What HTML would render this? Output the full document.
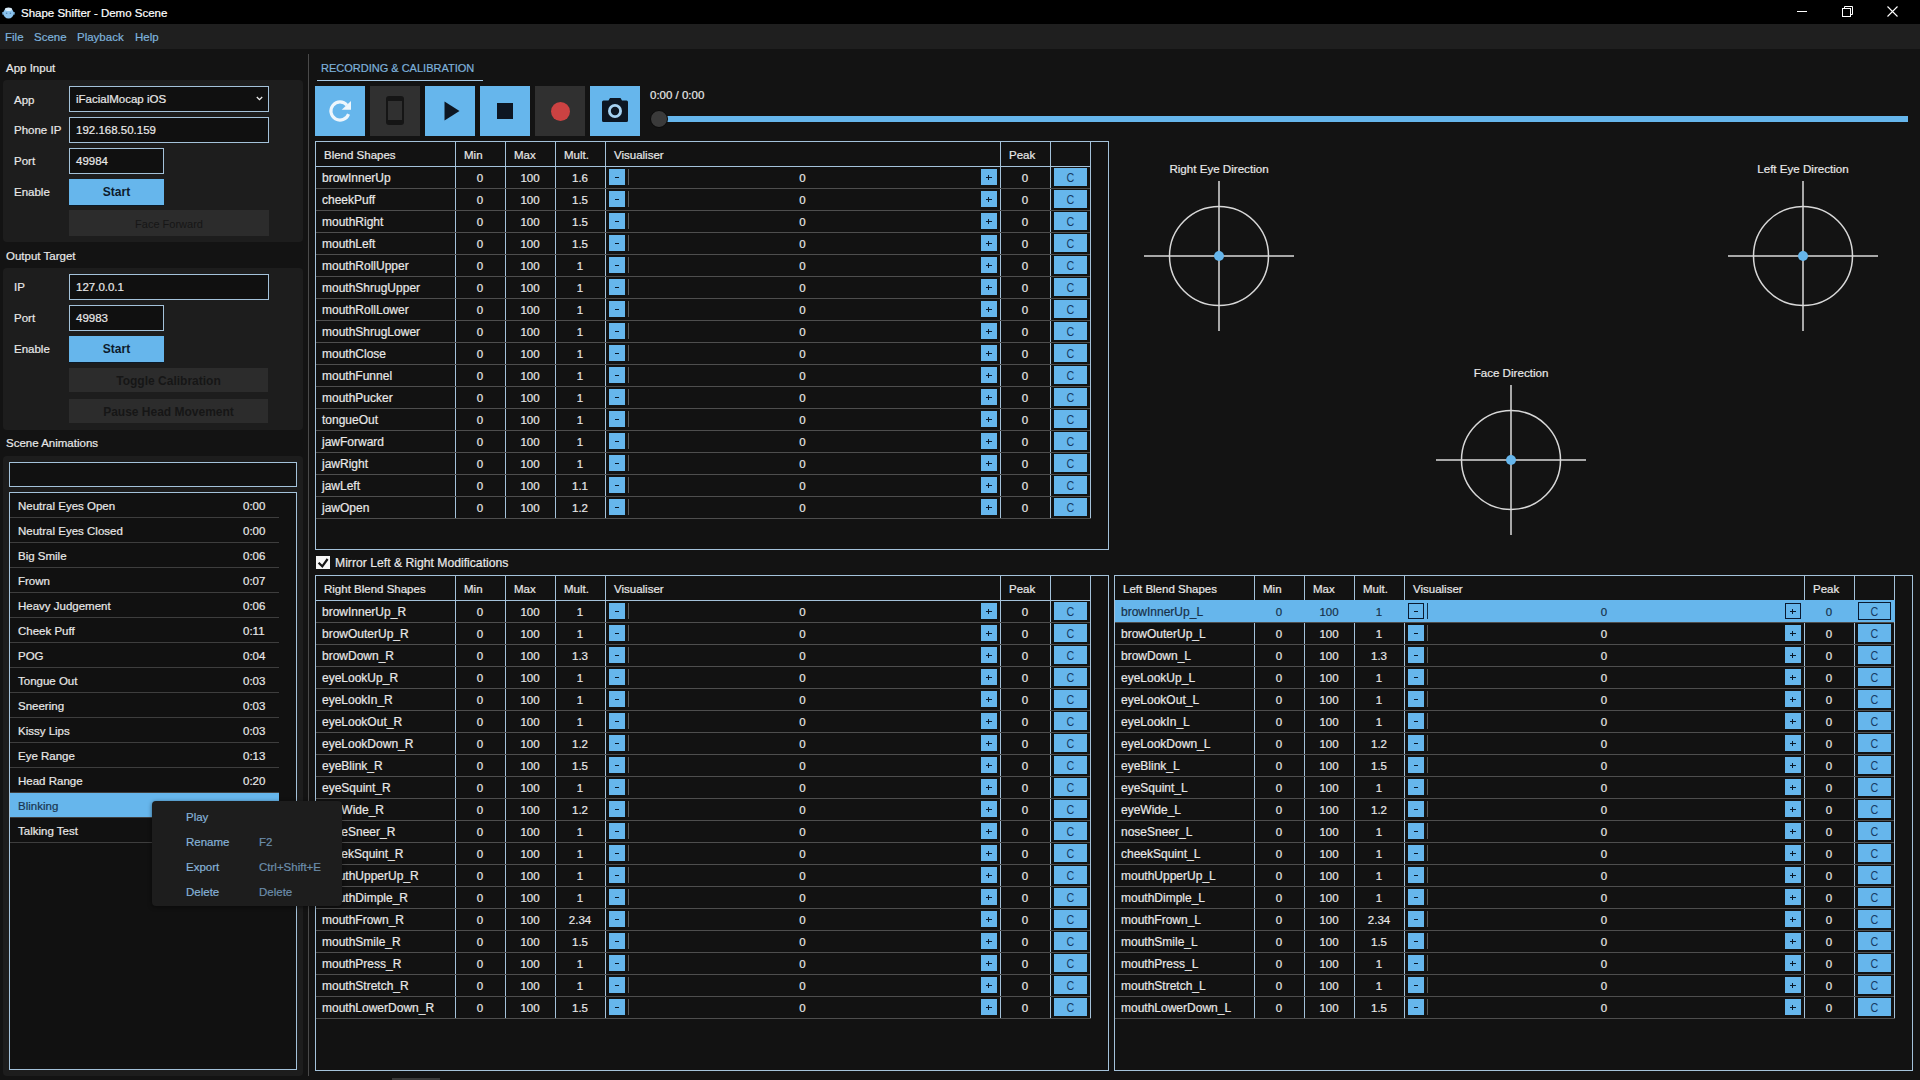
<!DOCTYPE html>
<html><head><meta charset="utf-8"><title>Shape Shifter - Demo Scene</title>
<style>
html,body{margin:0;padding:0;}
body{width:1920px;height:1080px;position:relative;overflow:hidden;background:#131313;font-family:"Liberation Sans",sans-serif;font-size:11.5px;color:#e8e8e8;}
.a{position:absolute;}
.t{position:absolute;white-space:nowrap;-webkit-text-stroke:0.2px currentColor;}
svg{display:block;}
</style></head><body>
<div class="a" style="left:0px;top:0px;width:1920px;height:24px;background:#000;"></div>
<svg class="a" style="left:2px;top:6px" width="13" height="13" viewBox="0 0 13 13"><ellipse cx="6.5" cy="7.3" rx="5.2" ry="5.2" fill="#8cc4ee"/><ellipse cx="6.5" cy="3.2" rx="3.6" ry="1.8" fill="#d8ecfa"/><rect x="0.3" y="6" width="1.8" height="2.6" fill="#7ab4e0"/><rect x="10.9" y="6" width="1.8" height="2.6" fill="#7ab4e0"/><circle cx="4.6" cy="7.3" r="0.8" fill="#4a80b0"/><circle cx="8.4" cy="7.3" r="0.8" fill="#4a80b0"/></svg>
<div class="t" style="left:21px;top:3px;height:20px;line-height:20px;font-size:11.5px;color:#fff;">Shape Shifter - Demo Scene</div>
<div class="a" style="left:1797px;top:11px;width:10px;height:1px;background:#fff;"></div>
<svg class="a" style="left:1841px;top:5px" width="13" height="13" viewBox="0 0 13 13" fill="none" stroke="#fff" stroke-width="1"><rect x="1.5" y="3.5" width="8" height="8"/><path d="M3.5 3.5V1.5H11.5V9.5H9.5"/></svg>
<svg class="a" style="left:1887px;top:6px" width="11" height="11" viewBox="0 0 11 11" stroke="#fff" stroke-width="1.1"><path d="M0.5 0.5L10.5 10.5M10.5 0.5L0.5 10.5"/></svg>
<div class="a" style="left:0px;top:24px;width:1920px;height:25px;background:#1f1f1f;"></div>
<div class="t" style="left:5px;top:27px;height:20px;line-height:20px;color:#7eb2dc;font-size:11.5px;">File</div>
<div class="t" style="left:34px;top:27px;height:20px;line-height:20px;color:#7eb2dc;font-size:11.5px;">Scene</div>
<div class="t" style="left:77px;top:27px;height:20px;line-height:20px;color:#7eb2dc;font-size:11.5px;">Playback</div>
<div class="t" style="left:135px;top:27px;height:20px;line-height:20px;color:#7eb2dc;font-size:11.5px;">Help</div>
<div class="t" style="left:6px;top:58px;height:20px;line-height:20px;">App Input</div>
<div class="a" style="left:3px;top:80px;width:300px;height:162px;background:#1d1d1d;border-radius:4px;"></div>
<div class="t" style="left:14px;top:90px;height:20px;line-height:20px;">App</div>
<div class="t" style="left:14px;top:120px;height:20px;line-height:20px;">Phone IP</div>
<div class="t" style="left:14px;top:151px;height:20px;line-height:20px;">Port</div>
<div class="t" style="left:14px;top:182px;height:20px;line-height:20px;">Enable</div>
<div class="a" style="left:69px;top:86px;width:198px;height:24px;background:#101010;border:1px solid #a4c2da;"></div>
<div class="t" style="left:76px;top:86px;height:26px;line-height:26px;">iFacialMocap iOS</div>
<svg class="a" style="left:256px;top:96px" width="7" height="5" viewBox="0 0 7 5" fill="none" stroke="#f0f0f0" stroke-width="1.3"><path d="M0.8 1L3.5 3.6L6.2 1"/></svg>
<div class="a" style="left:69px;top:117px;width:198px;height:24px;background:#101010;border:1px solid #a4c2da;"></div>
<div class="t" style="left:76px;top:117px;height:26px;line-height:26px;">192.168.50.159</div>
<div class="a" style="left:69px;top:148px;width:93px;height:24px;background:#101010;border:1px solid #a4c2da;"></div>
<div class="t" style="left:76px;top:148px;height:26px;line-height:26px;">49984</div>
<div class="a" style="left:69px;top:179px;width:95px;height:26px;background:#66b6ec;"></div>
<div class="a" style="left:69px;top:205px;width:95px;height:1px;background:#0b1a28;"></div>
<div class="t" style="left:69.0px;top:179px;width:95px;height:26px;line-height:26px;text-align:center;color:#0d1b2c;font-weight:bold;font-size:12px;-webkit-text-stroke:0;">Start</div>
<div class="a" style="left:69px;top:210px;width:200px;height:26px;background:#2c2c2c;"></div>
<div class="t" style="left:69.0px;top:211px;width:200px;height:26px;line-height:26px;text-align:center;color:#161616;-webkit-text-stroke:0;font-size:11px;">Face Forward</div>
<div class="t" style="left:6px;top:246px;height:20px;line-height:20px;">Output Target</div>
<div class="a" style="left:3px;top:268px;width:300px;height:162px;background:#1d1d1d;border-radius:4px;"></div>
<div class="t" style="left:14px;top:277px;height:20px;line-height:20px;">IP</div>
<div class="t" style="left:14px;top:308px;height:20px;line-height:20px;">Port</div>
<div class="t" style="left:14px;top:339px;height:20px;line-height:20px;">Enable</div>
<div class="a" style="left:69px;top:274px;width:198px;height:24px;background:#101010;border:1px solid #a4c2da;"></div>
<div class="t" style="left:76px;top:274px;height:26px;line-height:26px;">127.0.0.1</div>
<div class="a" style="left:69px;top:305px;width:93px;height:24px;background:#101010;border:1px solid #a4c2da;"></div>
<div class="t" style="left:76px;top:305px;height:26px;line-height:26px;">49983</div>
<div class="a" style="left:69px;top:336px;width:95px;height:26px;background:#66b6ec;"></div>
<div class="a" style="left:69px;top:362px;width:95px;height:1px;background:#0b1a28;"></div>
<div class="t" style="left:69.0px;top:336px;width:95px;height:26px;line-height:26px;text-align:center;color:#0d1b2c;font-weight:bold;font-size:12px;-webkit-text-stroke:0;">Start</div>
<div class="a" style="left:69px;top:368px;width:199px;height:24px;background:#2c2c2c;"></div>
<div class="t" style="left:69.0px;top:369px;width:199px;height:24px;line-height:24px;text-align:center;color:#161616;-webkit-text-stroke:0;font-weight:bold;font-size:12px;">Toggle Calibration</div>
<div class="a" style="left:69px;top:399px;width:199px;height:24px;background:#2c2c2c;"></div>
<div class="t" style="left:69.0px;top:400px;width:199px;height:24px;line-height:24px;text-align:center;color:#161616;-webkit-text-stroke:0;font-weight:bold;font-size:12px;">Pause Head Movement</div>
<div class="t" style="left:6px;top:433px;height:20px;line-height:20px;">Scene Animations</div>
<div class="a" style="left:3px;top:456px;width:300px;height:620px;background:#1d1d1d;border-radius:4px;"></div>
<div class="a" style="left:9px;top:462px;width:286px;height:23px;background:#111;border:1px solid #a4c2da;"></div>
<div class="a" style="left:9px;top:492px;width:286px;height:576px;background:#111;border:1px solid #a4c2da;"></div>
<div class="t" style="left:18px;top:494px;height:25px;line-height:25px;font-size:11.5px;">Neutral Eyes Open</div>
<div class="t" style="left:243px;top:494px;height:25px;line-height:25px;font-size:11.5px;">0:00</div>
<div class="a" style="left:10px;top:517px;width:269px;height:1px;background:#3e3e3e;"></div>
<div class="t" style="left:18px;top:519px;height:25px;line-height:25px;font-size:11.5px;">Neutral Eyes Closed</div>
<div class="t" style="left:243px;top:519px;height:25px;line-height:25px;font-size:11.5px;">0:00</div>
<div class="a" style="left:10px;top:542px;width:269px;height:1px;background:#3e3e3e;"></div>
<div class="t" style="left:18px;top:544px;height:25px;line-height:25px;font-size:11.5px;">Big Smile</div>
<div class="t" style="left:243px;top:544px;height:25px;line-height:25px;font-size:11.5px;">0:06</div>
<div class="a" style="left:10px;top:567px;width:269px;height:1px;background:#3e3e3e;"></div>
<div class="t" style="left:18px;top:569px;height:25px;line-height:25px;font-size:11.5px;">Frown</div>
<div class="t" style="left:243px;top:569px;height:25px;line-height:25px;font-size:11.5px;">0:07</div>
<div class="a" style="left:10px;top:592px;width:269px;height:1px;background:#3e3e3e;"></div>
<div class="t" style="left:18px;top:594px;height:25px;line-height:25px;font-size:11.5px;">Heavy Judgement</div>
<div class="t" style="left:243px;top:594px;height:25px;line-height:25px;font-size:11.5px;">0:06</div>
<div class="a" style="left:10px;top:617px;width:269px;height:1px;background:#3e3e3e;"></div>
<div class="t" style="left:18px;top:619px;height:25px;line-height:25px;font-size:11.5px;">Cheek Puff</div>
<div class="t" style="left:243px;top:619px;height:25px;line-height:25px;font-size:11.5px;">0:11</div>
<div class="a" style="left:10px;top:642px;width:269px;height:1px;background:#3e3e3e;"></div>
<div class="t" style="left:18px;top:644px;height:25px;line-height:25px;font-size:11.5px;">POG</div>
<div class="t" style="left:243px;top:644px;height:25px;line-height:25px;font-size:11.5px;">0:04</div>
<div class="a" style="left:10px;top:667px;width:269px;height:1px;background:#3e3e3e;"></div>
<div class="t" style="left:18px;top:669px;height:25px;line-height:25px;font-size:11.5px;">Tongue Out</div>
<div class="t" style="left:243px;top:669px;height:25px;line-height:25px;font-size:11.5px;">0:03</div>
<div class="a" style="left:10px;top:692px;width:269px;height:1px;background:#3e3e3e;"></div>
<div class="t" style="left:18px;top:694px;height:25px;line-height:25px;font-size:11.5px;">Sneering</div>
<div class="t" style="left:243px;top:694px;height:25px;line-height:25px;font-size:11.5px;">0:03</div>
<div class="a" style="left:10px;top:717px;width:269px;height:1px;background:#3e3e3e;"></div>
<div class="t" style="left:18px;top:719px;height:25px;line-height:25px;font-size:11.5px;">Kissy Lips</div>
<div class="t" style="left:243px;top:719px;height:25px;line-height:25px;font-size:11.5px;">0:03</div>
<div class="a" style="left:10px;top:742px;width:269px;height:1px;background:#3e3e3e;"></div>
<div class="t" style="left:18px;top:744px;height:25px;line-height:25px;font-size:11.5px;">Eye Range</div>
<div class="t" style="left:243px;top:744px;height:25px;line-height:25px;font-size:11.5px;">0:13</div>
<div class="a" style="left:10px;top:767px;width:269px;height:1px;background:#3e3e3e;"></div>
<div class="t" style="left:18px;top:769px;height:25px;line-height:25px;font-size:11.5px;">Head Range</div>
<div class="t" style="left:243px;top:769px;height:25px;line-height:25px;font-size:11.5px;">0:20</div>
<div class="a" style="left:10px;top:792px;width:269px;height:1px;background:#3e3e3e;"></div>
<div class="a" style="left:10px;top:793px;width:269px;height:25px;background:#66b6ec;"></div>
<div class="t" style="left:18px;top:794px;height:25px;line-height:25px;color:#1a3550;font-size:11.5px;">Blinking</div>
<div class="a" style="left:10px;top:817px;width:269px;height:1px;background:#3e3e3e;"></div>
<div class="t" style="left:18px;top:819px;height:25px;line-height:25px;font-size:11.5px;">Talking Test</div>
<div class="t" style="left:243px;top:819px;height:25px;line-height:25px;font-size:11.5px;">0:15</div>
<div class="a" style="left:10px;top:842px;width:269px;height:1px;background:#3e3e3e;"></div>
<div class="a" style="left:308px;top:54px;width:1px;height:1022px;background:#4a4a4a;"></div>
<div class="t" style="left:321px;top:58px;height:20px;line-height:20px;color:#7eb2dc;font-size:11px;">RECORDING &amp; CALIBRATION</div>
<div class="a" style="left:317px;top:80px;width:166px;height:1px;background:#a8cae6;"></div>
<div class="a" style="left:315px;top:86px;width:50px;height:50px;background:#66b6ec;"></div>
<div class="a" style="left:370px;top:86px;width:50px;height:50px;background:#303030;"></div>
<div class="a" style="left:425px;top:86px;width:50px;height:50px;background:#66b6ec;"></div>
<div class="a" style="left:480px;top:86px;width:50px;height:50px;background:#66b6ec;"></div>
<div class="a" style="left:535px;top:86px;width:50px;height:50px;background:#303030;"></div>
<div class="a" style="left:590px;top:86px;width:50px;height:50px;background:#66b6ec;"></div>
<svg class="a" style="left:315px;top:86px" width="50" height="50" viewBox="0 0 50 50"><path d="M31.97 19.15 A9.1 9.1 0 1 0 33.55 28.1" fill="none" stroke="#eef6fc" stroke-width="3.1"/><path d="M36 14.9 L36 23.8 L26.7 23.8 Z" fill="#eef6fc"/></svg>
<div class="a" style="left:386px;top:96px;width:14px;height:19px;border:2px solid #151515;border-top-width:5px;border-bottom-width:5px;border-radius:3px;background:#303030;"></div>
<svg class="a" style="left:425px;top:86px" width="50" height="50" viewBox="0 0 50 50"><path d="M19.5 15.5 L34.5 25 L19.5 34.5Z" fill="#0d1622"/></svg>
<div class="a" style="left:497px;top:103px;width:16px;height:16px;background:#0d1622;"></div>
<div class="a" style="left:550.5px;top:101.5px;width:19px;height:19px;border-radius:50%;background:#cc4242;"></div>
<svg class="a" style="left:590px;top:86px" width="50" height="50" viewBox="0 0 50 50"><path d="M13.5 14.5 H18.5 L20 12 H30.5 L32 14.5 H36.5 Q38 14.5 38 16 V34.5 Q38 36 36.5 36 H13.5 Q12 36 12 34.5 V16 Q12 14.5 13.5 14.5Z" fill="#0d1622"/><circle cx="25" cy="25" r="7" fill="#a6d2f2"/><circle cx="25" cy="25" r="4.2" fill="#0d1622"/></svg>
<div class="t" style="left:650px;top:85px;height:20px;line-height:20px;font-size:11.5px;">0:00 / 0:00</div>
<div class="a" style="left:667px;top:116px;width:1241px;height:6px;background:#66b6ec;"></div>
<div class="a" style="left:650px;top:110px;width:16px;height:16px;border-radius:50%;background:#3a3a3a;border:1px solid #0a0a0a;"></div>
<div class="a" style="left:315px;top:141px;width:792px;height:407px;background:#121212;border:1px solid #a4c2da;"></div>
<div class="a" style="left:316px;top:166px;width:774px;height:1px;background:#a4c2da;"></div>
<div class="a" style="left:455px;top:142px;width:1px;height:377px;background:#a4c2da;"></div>
<div class="a" style="left:505px;top:142px;width:1px;height:377px;background:#a4c2da;"></div>
<div class="a" style="left:555px;top:142px;width:1px;height:377px;background:#a4c2da;"></div>
<div class="a" style="left:605px;top:142px;width:1px;height:377px;background:#a4c2da;"></div>
<div class="a" style="left:1000px;top:142px;width:1px;height:377px;background:#a4c2da;"></div>
<div class="a" style="left:1050px;top:142px;width:1px;height:377px;background:#a4c2da;"></div>
<div class="a" style="left:1090px;top:142px;width:1px;height:377px;background:#a4c2da;"></div>
<div class="t" style="left:324px;top:145px;height:20px;line-height:20px;">Blend Shapes</div>
<div class="t" style="left:464px;top:145px;height:20px;line-height:20px;">Min</div>
<div class="t" style="left:514px;top:145px;height:20px;line-height:20px;">Max</div>
<div class="t" style="left:564px;top:145px;height:20px;line-height:20px;">Mult.</div>
<div class="t" style="left:614px;top:145px;height:20px;line-height:20px;">Visualiser</div>
<div class="t" style="left:1009px;top:145px;height:20px;line-height:20px;">Peak</div>
<div class="t" style="left:322px;top:168px;height:21px;line-height:21px;color:#e8e8e8;font-size:12px;">browInnerUp</div>
<div class="t" style="left:450.0px;top:168px;width:60px;height:21px;line-height:21px;text-align:center;color:#e8e8e8;">0</div>
<div class="t" style="left:500.0px;top:168px;width:60px;height:21px;line-height:21px;text-align:center;color:#e8e8e8;">100</div>
<div class="t" style="left:550.0px;top:168px;width:60px;height:21px;line-height:21px;text-align:center;color:#e8e8e8;">1.6</div>
<div class="a" style="left:609px;top:169px;width:16px;height:16px;background:#66b6ec;"></div>
<div class="a" style="left:615px;top:177px;width:4px;height:1px;background:#0a1a2c;"></div>
<div class="a" style="left:628px;top:169px;width:1px;height:16px;background:#5a5a5a;"></div>
<div class="t" style="left:772.5px;top:168px;width:60px;height:21px;line-height:21px;text-align:center;color:#e8e8e8;">0</div>
<div class="a" style="left:981px;top:169px;width:16px;height:16px;background:#66b6ec;"></div>
<div class="a" style="left:986px;top:177px;width:6px;height:1px;background:#0a1a2c;"></div>
<div class="a" style="left:988px;top:175px;width:1px;height:5px;background:#0a1a2c;"></div>
<div class="t" style="left:995.0px;top:168px;width:60px;height:21px;line-height:21px;text-align:center;color:#e8e8e8;">0</div>
<div class="a" style="left:1054px;top:168px;width:33px;height:18px;background:#66b6ec;"></div>
<div class="t" style="left:1054.0px;top:168px;width:33px;height:20px;line-height:20px;text-align:center;color:#163a64;font-size:12.5px;-webkit-text-stroke:0;transform:scaleX(0.86);">C</div>
<div class="a" style="left:316px;top:188px;width:774px;height:1px;background:#4e4e4e;"></div>
<div class="t" style="left:322px;top:190px;height:21px;line-height:21px;color:#e8e8e8;font-size:12px;">cheekPuff</div>
<div class="t" style="left:450.0px;top:190px;width:60px;height:21px;line-height:21px;text-align:center;color:#e8e8e8;">0</div>
<div class="t" style="left:500.0px;top:190px;width:60px;height:21px;line-height:21px;text-align:center;color:#e8e8e8;">100</div>
<div class="t" style="left:550.0px;top:190px;width:60px;height:21px;line-height:21px;text-align:center;color:#e8e8e8;">1.5</div>
<div class="a" style="left:609px;top:191px;width:16px;height:16px;background:#66b6ec;"></div>
<div class="a" style="left:615px;top:199px;width:4px;height:1px;background:#0a1a2c;"></div>
<div class="a" style="left:628px;top:191px;width:1px;height:16px;background:#5a5a5a;"></div>
<div class="t" style="left:772.5px;top:190px;width:60px;height:21px;line-height:21px;text-align:center;color:#e8e8e8;">0</div>
<div class="a" style="left:981px;top:191px;width:16px;height:16px;background:#66b6ec;"></div>
<div class="a" style="left:986px;top:199px;width:6px;height:1px;background:#0a1a2c;"></div>
<div class="a" style="left:988px;top:197px;width:1px;height:5px;background:#0a1a2c;"></div>
<div class="t" style="left:995.0px;top:190px;width:60px;height:21px;line-height:21px;text-align:center;color:#e8e8e8;">0</div>
<div class="a" style="left:1054px;top:190px;width:33px;height:18px;background:#66b6ec;"></div>
<div class="t" style="left:1054.0px;top:190px;width:33px;height:20px;line-height:20px;text-align:center;color:#163a64;font-size:12.5px;-webkit-text-stroke:0;transform:scaleX(0.86);">C</div>
<div class="a" style="left:316px;top:210px;width:774px;height:1px;background:#4e4e4e;"></div>
<div class="t" style="left:322px;top:212px;height:21px;line-height:21px;color:#e8e8e8;font-size:12px;">mouthRight</div>
<div class="t" style="left:450.0px;top:212px;width:60px;height:21px;line-height:21px;text-align:center;color:#e8e8e8;">0</div>
<div class="t" style="left:500.0px;top:212px;width:60px;height:21px;line-height:21px;text-align:center;color:#e8e8e8;">100</div>
<div class="t" style="left:550.0px;top:212px;width:60px;height:21px;line-height:21px;text-align:center;color:#e8e8e8;">1.5</div>
<div class="a" style="left:609px;top:213px;width:16px;height:16px;background:#66b6ec;"></div>
<div class="a" style="left:615px;top:221px;width:4px;height:1px;background:#0a1a2c;"></div>
<div class="a" style="left:628px;top:213px;width:1px;height:16px;background:#5a5a5a;"></div>
<div class="t" style="left:772.5px;top:212px;width:60px;height:21px;line-height:21px;text-align:center;color:#e8e8e8;">0</div>
<div class="a" style="left:981px;top:213px;width:16px;height:16px;background:#66b6ec;"></div>
<div class="a" style="left:986px;top:221px;width:6px;height:1px;background:#0a1a2c;"></div>
<div class="a" style="left:988px;top:219px;width:1px;height:5px;background:#0a1a2c;"></div>
<div class="t" style="left:995.0px;top:212px;width:60px;height:21px;line-height:21px;text-align:center;color:#e8e8e8;">0</div>
<div class="a" style="left:1054px;top:212px;width:33px;height:18px;background:#66b6ec;"></div>
<div class="t" style="left:1054.0px;top:212px;width:33px;height:20px;line-height:20px;text-align:center;color:#163a64;font-size:12.5px;-webkit-text-stroke:0;transform:scaleX(0.86);">C</div>
<div class="a" style="left:316px;top:232px;width:774px;height:1px;background:#4e4e4e;"></div>
<div class="t" style="left:322px;top:234px;height:21px;line-height:21px;color:#e8e8e8;font-size:12px;">mouthLeft</div>
<div class="t" style="left:450.0px;top:234px;width:60px;height:21px;line-height:21px;text-align:center;color:#e8e8e8;">0</div>
<div class="t" style="left:500.0px;top:234px;width:60px;height:21px;line-height:21px;text-align:center;color:#e8e8e8;">100</div>
<div class="t" style="left:550.0px;top:234px;width:60px;height:21px;line-height:21px;text-align:center;color:#e8e8e8;">1.5</div>
<div class="a" style="left:609px;top:235px;width:16px;height:16px;background:#66b6ec;"></div>
<div class="a" style="left:615px;top:243px;width:4px;height:1px;background:#0a1a2c;"></div>
<div class="a" style="left:628px;top:235px;width:1px;height:16px;background:#5a5a5a;"></div>
<div class="t" style="left:772.5px;top:234px;width:60px;height:21px;line-height:21px;text-align:center;color:#e8e8e8;">0</div>
<div class="a" style="left:981px;top:235px;width:16px;height:16px;background:#66b6ec;"></div>
<div class="a" style="left:986px;top:243px;width:6px;height:1px;background:#0a1a2c;"></div>
<div class="a" style="left:988px;top:241px;width:1px;height:5px;background:#0a1a2c;"></div>
<div class="t" style="left:995.0px;top:234px;width:60px;height:21px;line-height:21px;text-align:center;color:#e8e8e8;">0</div>
<div class="a" style="left:1054px;top:234px;width:33px;height:18px;background:#66b6ec;"></div>
<div class="t" style="left:1054.0px;top:234px;width:33px;height:20px;line-height:20px;text-align:center;color:#163a64;font-size:12.5px;-webkit-text-stroke:0;transform:scaleX(0.86);">C</div>
<div class="a" style="left:316px;top:254px;width:774px;height:1px;background:#4e4e4e;"></div>
<div class="t" style="left:322px;top:256px;height:21px;line-height:21px;color:#e8e8e8;font-size:12px;">mouthRollUpper</div>
<div class="t" style="left:450.0px;top:256px;width:60px;height:21px;line-height:21px;text-align:center;color:#e8e8e8;">0</div>
<div class="t" style="left:500.0px;top:256px;width:60px;height:21px;line-height:21px;text-align:center;color:#e8e8e8;">100</div>
<div class="t" style="left:550.0px;top:256px;width:60px;height:21px;line-height:21px;text-align:center;color:#e8e8e8;">1</div>
<div class="a" style="left:609px;top:257px;width:16px;height:16px;background:#66b6ec;"></div>
<div class="a" style="left:615px;top:265px;width:4px;height:1px;background:#0a1a2c;"></div>
<div class="a" style="left:628px;top:257px;width:1px;height:16px;background:#5a5a5a;"></div>
<div class="t" style="left:772.5px;top:256px;width:60px;height:21px;line-height:21px;text-align:center;color:#e8e8e8;">0</div>
<div class="a" style="left:981px;top:257px;width:16px;height:16px;background:#66b6ec;"></div>
<div class="a" style="left:986px;top:265px;width:6px;height:1px;background:#0a1a2c;"></div>
<div class="a" style="left:988px;top:263px;width:1px;height:5px;background:#0a1a2c;"></div>
<div class="t" style="left:995.0px;top:256px;width:60px;height:21px;line-height:21px;text-align:center;color:#e8e8e8;">0</div>
<div class="a" style="left:1054px;top:256px;width:33px;height:18px;background:#66b6ec;"></div>
<div class="t" style="left:1054.0px;top:256px;width:33px;height:20px;line-height:20px;text-align:center;color:#163a64;font-size:12.5px;-webkit-text-stroke:0;transform:scaleX(0.86);">C</div>
<div class="a" style="left:316px;top:276px;width:774px;height:1px;background:#4e4e4e;"></div>
<div class="t" style="left:322px;top:278px;height:21px;line-height:21px;color:#e8e8e8;font-size:12px;">mouthShrugUpper</div>
<div class="t" style="left:450.0px;top:278px;width:60px;height:21px;line-height:21px;text-align:center;color:#e8e8e8;">0</div>
<div class="t" style="left:500.0px;top:278px;width:60px;height:21px;line-height:21px;text-align:center;color:#e8e8e8;">100</div>
<div class="t" style="left:550.0px;top:278px;width:60px;height:21px;line-height:21px;text-align:center;color:#e8e8e8;">1</div>
<div class="a" style="left:609px;top:279px;width:16px;height:16px;background:#66b6ec;"></div>
<div class="a" style="left:615px;top:287px;width:4px;height:1px;background:#0a1a2c;"></div>
<div class="a" style="left:628px;top:279px;width:1px;height:16px;background:#5a5a5a;"></div>
<div class="t" style="left:772.5px;top:278px;width:60px;height:21px;line-height:21px;text-align:center;color:#e8e8e8;">0</div>
<div class="a" style="left:981px;top:279px;width:16px;height:16px;background:#66b6ec;"></div>
<div class="a" style="left:986px;top:287px;width:6px;height:1px;background:#0a1a2c;"></div>
<div class="a" style="left:988px;top:285px;width:1px;height:5px;background:#0a1a2c;"></div>
<div class="t" style="left:995.0px;top:278px;width:60px;height:21px;line-height:21px;text-align:center;color:#e8e8e8;">0</div>
<div class="a" style="left:1054px;top:278px;width:33px;height:18px;background:#66b6ec;"></div>
<div class="t" style="left:1054.0px;top:278px;width:33px;height:20px;line-height:20px;text-align:center;color:#163a64;font-size:12.5px;-webkit-text-stroke:0;transform:scaleX(0.86);">C</div>
<div class="a" style="left:316px;top:298px;width:774px;height:1px;background:#4e4e4e;"></div>
<div class="t" style="left:322px;top:300px;height:21px;line-height:21px;color:#e8e8e8;font-size:12px;">mouthRollLower</div>
<div class="t" style="left:450.0px;top:300px;width:60px;height:21px;line-height:21px;text-align:center;color:#e8e8e8;">0</div>
<div class="t" style="left:500.0px;top:300px;width:60px;height:21px;line-height:21px;text-align:center;color:#e8e8e8;">100</div>
<div class="t" style="left:550.0px;top:300px;width:60px;height:21px;line-height:21px;text-align:center;color:#e8e8e8;">1</div>
<div class="a" style="left:609px;top:301px;width:16px;height:16px;background:#66b6ec;"></div>
<div class="a" style="left:615px;top:309px;width:4px;height:1px;background:#0a1a2c;"></div>
<div class="a" style="left:628px;top:301px;width:1px;height:16px;background:#5a5a5a;"></div>
<div class="t" style="left:772.5px;top:300px;width:60px;height:21px;line-height:21px;text-align:center;color:#e8e8e8;">0</div>
<div class="a" style="left:981px;top:301px;width:16px;height:16px;background:#66b6ec;"></div>
<div class="a" style="left:986px;top:309px;width:6px;height:1px;background:#0a1a2c;"></div>
<div class="a" style="left:988px;top:307px;width:1px;height:5px;background:#0a1a2c;"></div>
<div class="t" style="left:995.0px;top:300px;width:60px;height:21px;line-height:21px;text-align:center;color:#e8e8e8;">0</div>
<div class="a" style="left:1054px;top:300px;width:33px;height:18px;background:#66b6ec;"></div>
<div class="t" style="left:1054.0px;top:300px;width:33px;height:20px;line-height:20px;text-align:center;color:#163a64;font-size:12.5px;-webkit-text-stroke:0;transform:scaleX(0.86);">C</div>
<div class="a" style="left:316px;top:320px;width:774px;height:1px;background:#4e4e4e;"></div>
<div class="t" style="left:322px;top:322px;height:21px;line-height:21px;color:#e8e8e8;font-size:12px;">mouthShrugLower</div>
<div class="t" style="left:450.0px;top:322px;width:60px;height:21px;line-height:21px;text-align:center;color:#e8e8e8;">0</div>
<div class="t" style="left:500.0px;top:322px;width:60px;height:21px;line-height:21px;text-align:center;color:#e8e8e8;">100</div>
<div class="t" style="left:550.0px;top:322px;width:60px;height:21px;line-height:21px;text-align:center;color:#e8e8e8;">1</div>
<div class="a" style="left:609px;top:323px;width:16px;height:16px;background:#66b6ec;"></div>
<div class="a" style="left:615px;top:331px;width:4px;height:1px;background:#0a1a2c;"></div>
<div class="a" style="left:628px;top:323px;width:1px;height:16px;background:#5a5a5a;"></div>
<div class="t" style="left:772.5px;top:322px;width:60px;height:21px;line-height:21px;text-align:center;color:#e8e8e8;">0</div>
<div class="a" style="left:981px;top:323px;width:16px;height:16px;background:#66b6ec;"></div>
<div class="a" style="left:986px;top:331px;width:6px;height:1px;background:#0a1a2c;"></div>
<div class="a" style="left:988px;top:329px;width:1px;height:5px;background:#0a1a2c;"></div>
<div class="t" style="left:995.0px;top:322px;width:60px;height:21px;line-height:21px;text-align:center;color:#e8e8e8;">0</div>
<div class="a" style="left:1054px;top:322px;width:33px;height:18px;background:#66b6ec;"></div>
<div class="t" style="left:1054.0px;top:322px;width:33px;height:20px;line-height:20px;text-align:center;color:#163a64;font-size:12.5px;-webkit-text-stroke:0;transform:scaleX(0.86);">C</div>
<div class="a" style="left:316px;top:342px;width:774px;height:1px;background:#4e4e4e;"></div>
<div class="t" style="left:322px;top:344px;height:21px;line-height:21px;color:#e8e8e8;font-size:12px;">mouthClose</div>
<div class="t" style="left:450.0px;top:344px;width:60px;height:21px;line-height:21px;text-align:center;color:#e8e8e8;">0</div>
<div class="t" style="left:500.0px;top:344px;width:60px;height:21px;line-height:21px;text-align:center;color:#e8e8e8;">100</div>
<div class="t" style="left:550.0px;top:344px;width:60px;height:21px;line-height:21px;text-align:center;color:#e8e8e8;">1</div>
<div class="a" style="left:609px;top:345px;width:16px;height:16px;background:#66b6ec;"></div>
<div class="a" style="left:615px;top:353px;width:4px;height:1px;background:#0a1a2c;"></div>
<div class="a" style="left:628px;top:345px;width:1px;height:16px;background:#5a5a5a;"></div>
<div class="t" style="left:772.5px;top:344px;width:60px;height:21px;line-height:21px;text-align:center;color:#e8e8e8;">0</div>
<div class="a" style="left:981px;top:345px;width:16px;height:16px;background:#66b6ec;"></div>
<div class="a" style="left:986px;top:353px;width:6px;height:1px;background:#0a1a2c;"></div>
<div class="a" style="left:988px;top:351px;width:1px;height:5px;background:#0a1a2c;"></div>
<div class="t" style="left:995.0px;top:344px;width:60px;height:21px;line-height:21px;text-align:center;color:#e8e8e8;">0</div>
<div class="a" style="left:1054px;top:344px;width:33px;height:18px;background:#66b6ec;"></div>
<div class="t" style="left:1054.0px;top:344px;width:33px;height:20px;line-height:20px;text-align:center;color:#163a64;font-size:12.5px;-webkit-text-stroke:0;transform:scaleX(0.86);">C</div>
<div class="a" style="left:316px;top:364px;width:774px;height:1px;background:#4e4e4e;"></div>
<div class="t" style="left:322px;top:366px;height:21px;line-height:21px;color:#e8e8e8;font-size:12px;">mouthFunnel</div>
<div class="t" style="left:450.0px;top:366px;width:60px;height:21px;line-height:21px;text-align:center;color:#e8e8e8;">0</div>
<div class="t" style="left:500.0px;top:366px;width:60px;height:21px;line-height:21px;text-align:center;color:#e8e8e8;">100</div>
<div class="t" style="left:550.0px;top:366px;width:60px;height:21px;line-height:21px;text-align:center;color:#e8e8e8;">1</div>
<div class="a" style="left:609px;top:367px;width:16px;height:16px;background:#66b6ec;"></div>
<div class="a" style="left:615px;top:375px;width:4px;height:1px;background:#0a1a2c;"></div>
<div class="a" style="left:628px;top:367px;width:1px;height:16px;background:#5a5a5a;"></div>
<div class="t" style="left:772.5px;top:366px;width:60px;height:21px;line-height:21px;text-align:center;color:#e8e8e8;">0</div>
<div class="a" style="left:981px;top:367px;width:16px;height:16px;background:#66b6ec;"></div>
<div class="a" style="left:986px;top:375px;width:6px;height:1px;background:#0a1a2c;"></div>
<div class="a" style="left:988px;top:373px;width:1px;height:5px;background:#0a1a2c;"></div>
<div class="t" style="left:995.0px;top:366px;width:60px;height:21px;line-height:21px;text-align:center;color:#e8e8e8;">0</div>
<div class="a" style="left:1054px;top:366px;width:33px;height:18px;background:#66b6ec;"></div>
<div class="t" style="left:1054.0px;top:366px;width:33px;height:20px;line-height:20px;text-align:center;color:#163a64;font-size:12.5px;-webkit-text-stroke:0;transform:scaleX(0.86);">C</div>
<div class="a" style="left:316px;top:386px;width:774px;height:1px;background:#4e4e4e;"></div>
<div class="t" style="left:322px;top:388px;height:21px;line-height:21px;color:#e8e8e8;font-size:12px;">mouthPucker</div>
<div class="t" style="left:450.0px;top:388px;width:60px;height:21px;line-height:21px;text-align:center;color:#e8e8e8;">0</div>
<div class="t" style="left:500.0px;top:388px;width:60px;height:21px;line-height:21px;text-align:center;color:#e8e8e8;">100</div>
<div class="t" style="left:550.0px;top:388px;width:60px;height:21px;line-height:21px;text-align:center;color:#e8e8e8;">1</div>
<div class="a" style="left:609px;top:389px;width:16px;height:16px;background:#66b6ec;"></div>
<div class="a" style="left:615px;top:397px;width:4px;height:1px;background:#0a1a2c;"></div>
<div class="a" style="left:628px;top:389px;width:1px;height:16px;background:#5a5a5a;"></div>
<div class="t" style="left:772.5px;top:388px;width:60px;height:21px;line-height:21px;text-align:center;color:#e8e8e8;">0</div>
<div class="a" style="left:981px;top:389px;width:16px;height:16px;background:#66b6ec;"></div>
<div class="a" style="left:986px;top:397px;width:6px;height:1px;background:#0a1a2c;"></div>
<div class="a" style="left:988px;top:395px;width:1px;height:5px;background:#0a1a2c;"></div>
<div class="t" style="left:995.0px;top:388px;width:60px;height:21px;line-height:21px;text-align:center;color:#e8e8e8;">0</div>
<div class="a" style="left:1054px;top:388px;width:33px;height:18px;background:#66b6ec;"></div>
<div class="t" style="left:1054.0px;top:388px;width:33px;height:20px;line-height:20px;text-align:center;color:#163a64;font-size:12.5px;-webkit-text-stroke:0;transform:scaleX(0.86);">C</div>
<div class="a" style="left:316px;top:408px;width:774px;height:1px;background:#4e4e4e;"></div>
<div class="t" style="left:322px;top:410px;height:21px;line-height:21px;color:#e8e8e8;font-size:12px;">tongueOut</div>
<div class="t" style="left:450.0px;top:410px;width:60px;height:21px;line-height:21px;text-align:center;color:#e8e8e8;">0</div>
<div class="t" style="left:500.0px;top:410px;width:60px;height:21px;line-height:21px;text-align:center;color:#e8e8e8;">100</div>
<div class="t" style="left:550.0px;top:410px;width:60px;height:21px;line-height:21px;text-align:center;color:#e8e8e8;">1</div>
<div class="a" style="left:609px;top:411px;width:16px;height:16px;background:#66b6ec;"></div>
<div class="a" style="left:615px;top:419px;width:4px;height:1px;background:#0a1a2c;"></div>
<div class="a" style="left:628px;top:411px;width:1px;height:16px;background:#5a5a5a;"></div>
<div class="t" style="left:772.5px;top:410px;width:60px;height:21px;line-height:21px;text-align:center;color:#e8e8e8;">0</div>
<div class="a" style="left:981px;top:411px;width:16px;height:16px;background:#66b6ec;"></div>
<div class="a" style="left:986px;top:419px;width:6px;height:1px;background:#0a1a2c;"></div>
<div class="a" style="left:988px;top:417px;width:1px;height:5px;background:#0a1a2c;"></div>
<div class="t" style="left:995.0px;top:410px;width:60px;height:21px;line-height:21px;text-align:center;color:#e8e8e8;">0</div>
<div class="a" style="left:1054px;top:410px;width:33px;height:18px;background:#66b6ec;"></div>
<div class="t" style="left:1054.0px;top:410px;width:33px;height:20px;line-height:20px;text-align:center;color:#163a64;font-size:12.5px;-webkit-text-stroke:0;transform:scaleX(0.86);">C</div>
<div class="a" style="left:316px;top:430px;width:774px;height:1px;background:#4e4e4e;"></div>
<div class="t" style="left:322px;top:432px;height:21px;line-height:21px;color:#e8e8e8;font-size:12px;">jawForward</div>
<div class="t" style="left:450.0px;top:432px;width:60px;height:21px;line-height:21px;text-align:center;color:#e8e8e8;">0</div>
<div class="t" style="left:500.0px;top:432px;width:60px;height:21px;line-height:21px;text-align:center;color:#e8e8e8;">100</div>
<div class="t" style="left:550.0px;top:432px;width:60px;height:21px;line-height:21px;text-align:center;color:#e8e8e8;">1</div>
<div class="a" style="left:609px;top:433px;width:16px;height:16px;background:#66b6ec;"></div>
<div class="a" style="left:615px;top:441px;width:4px;height:1px;background:#0a1a2c;"></div>
<div class="a" style="left:628px;top:433px;width:1px;height:16px;background:#5a5a5a;"></div>
<div class="t" style="left:772.5px;top:432px;width:60px;height:21px;line-height:21px;text-align:center;color:#e8e8e8;">0</div>
<div class="a" style="left:981px;top:433px;width:16px;height:16px;background:#66b6ec;"></div>
<div class="a" style="left:986px;top:441px;width:6px;height:1px;background:#0a1a2c;"></div>
<div class="a" style="left:988px;top:439px;width:1px;height:5px;background:#0a1a2c;"></div>
<div class="t" style="left:995.0px;top:432px;width:60px;height:21px;line-height:21px;text-align:center;color:#e8e8e8;">0</div>
<div class="a" style="left:1054px;top:432px;width:33px;height:18px;background:#66b6ec;"></div>
<div class="t" style="left:1054.0px;top:432px;width:33px;height:20px;line-height:20px;text-align:center;color:#163a64;font-size:12.5px;-webkit-text-stroke:0;transform:scaleX(0.86);">C</div>
<div class="a" style="left:316px;top:452px;width:774px;height:1px;background:#4e4e4e;"></div>
<div class="t" style="left:322px;top:454px;height:21px;line-height:21px;color:#e8e8e8;font-size:12px;">jawRight</div>
<div class="t" style="left:450.0px;top:454px;width:60px;height:21px;line-height:21px;text-align:center;color:#e8e8e8;">0</div>
<div class="t" style="left:500.0px;top:454px;width:60px;height:21px;line-height:21px;text-align:center;color:#e8e8e8;">100</div>
<div class="t" style="left:550.0px;top:454px;width:60px;height:21px;line-height:21px;text-align:center;color:#e8e8e8;">1</div>
<div class="a" style="left:609px;top:455px;width:16px;height:16px;background:#66b6ec;"></div>
<div class="a" style="left:615px;top:463px;width:4px;height:1px;background:#0a1a2c;"></div>
<div class="a" style="left:628px;top:455px;width:1px;height:16px;background:#5a5a5a;"></div>
<div class="t" style="left:772.5px;top:454px;width:60px;height:21px;line-height:21px;text-align:center;color:#e8e8e8;">0</div>
<div class="a" style="left:981px;top:455px;width:16px;height:16px;background:#66b6ec;"></div>
<div class="a" style="left:986px;top:463px;width:6px;height:1px;background:#0a1a2c;"></div>
<div class="a" style="left:988px;top:461px;width:1px;height:5px;background:#0a1a2c;"></div>
<div class="t" style="left:995.0px;top:454px;width:60px;height:21px;line-height:21px;text-align:center;color:#e8e8e8;">0</div>
<div class="a" style="left:1054px;top:454px;width:33px;height:18px;background:#66b6ec;"></div>
<div class="t" style="left:1054.0px;top:454px;width:33px;height:20px;line-height:20px;text-align:center;color:#163a64;font-size:12.5px;-webkit-text-stroke:0;transform:scaleX(0.86);">C</div>
<div class="a" style="left:316px;top:474px;width:774px;height:1px;background:#4e4e4e;"></div>
<div class="t" style="left:322px;top:476px;height:21px;line-height:21px;color:#e8e8e8;font-size:12px;">jawLeft</div>
<div class="t" style="left:450.0px;top:476px;width:60px;height:21px;line-height:21px;text-align:center;color:#e8e8e8;">0</div>
<div class="t" style="left:500.0px;top:476px;width:60px;height:21px;line-height:21px;text-align:center;color:#e8e8e8;">100</div>
<div class="t" style="left:550.0px;top:476px;width:60px;height:21px;line-height:21px;text-align:center;color:#e8e8e8;">1.1</div>
<div class="a" style="left:609px;top:477px;width:16px;height:16px;background:#66b6ec;"></div>
<div class="a" style="left:615px;top:485px;width:4px;height:1px;background:#0a1a2c;"></div>
<div class="a" style="left:628px;top:477px;width:1px;height:16px;background:#5a5a5a;"></div>
<div class="t" style="left:772.5px;top:476px;width:60px;height:21px;line-height:21px;text-align:center;color:#e8e8e8;">0</div>
<div class="a" style="left:981px;top:477px;width:16px;height:16px;background:#66b6ec;"></div>
<div class="a" style="left:986px;top:485px;width:6px;height:1px;background:#0a1a2c;"></div>
<div class="a" style="left:988px;top:483px;width:1px;height:5px;background:#0a1a2c;"></div>
<div class="t" style="left:995.0px;top:476px;width:60px;height:21px;line-height:21px;text-align:center;color:#e8e8e8;">0</div>
<div class="a" style="left:1054px;top:476px;width:33px;height:18px;background:#66b6ec;"></div>
<div class="t" style="left:1054.0px;top:476px;width:33px;height:20px;line-height:20px;text-align:center;color:#163a64;font-size:12.5px;-webkit-text-stroke:0;transform:scaleX(0.86);">C</div>
<div class="a" style="left:316px;top:496px;width:774px;height:1px;background:#4e4e4e;"></div>
<div class="t" style="left:322px;top:498px;height:21px;line-height:21px;color:#e8e8e8;font-size:12px;">jawOpen</div>
<div class="t" style="left:450.0px;top:498px;width:60px;height:21px;line-height:21px;text-align:center;color:#e8e8e8;">0</div>
<div class="t" style="left:500.0px;top:498px;width:60px;height:21px;line-height:21px;text-align:center;color:#e8e8e8;">100</div>
<div class="t" style="left:550.0px;top:498px;width:60px;height:21px;line-height:21px;text-align:center;color:#e8e8e8;">1.2</div>
<div class="a" style="left:609px;top:499px;width:16px;height:16px;background:#66b6ec;"></div>
<div class="a" style="left:615px;top:507px;width:4px;height:1px;background:#0a1a2c;"></div>
<div class="a" style="left:628px;top:499px;width:1px;height:16px;background:#5a5a5a;"></div>
<div class="t" style="left:772.5px;top:498px;width:60px;height:21px;line-height:21px;text-align:center;color:#e8e8e8;">0</div>
<div class="a" style="left:981px;top:499px;width:16px;height:16px;background:#66b6ec;"></div>
<div class="a" style="left:986px;top:507px;width:6px;height:1px;background:#0a1a2c;"></div>
<div class="a" style="left:988px;top:505px;width:1px;height:5px;background:#0a1a2c;"></div>
<div class="t" style="left:995.0px;top:498px;width:60px;height:21px;line-height:21px;text-align:center;color:#e8e8e8;">0</div>
<div class="a" style="left:1054px;top:498px;width:33px;height:18px;background:#66b6ec;"></div>
<div class="t" style="left:1054.0px;top:498px;width:33px;height:20px;line-height:20px;text-align:center;color:#163a64;font-size:12.5px;-webkit-text-stroke:0;transform:scaleX(0.86);">C</div>
<div class="a" style="left:316px;top:518px;width:775px;height:1px;background:#4e4e4e;"></div>
<svg class="a" style="left:316px;top:556px" width="14" height="13" viewBox="0 0 14 13"><rect x="0" y="0" width="14" height="13" fill="#f6f6f6"/><path d="M2.6 6.8 L6.3 10.3 L11.6 3" fill="none" stroke="#141414" stroke-width="2.2"/></svg>
<div class="t" style="left:335px;top:553px;height:20px;line-height:20px;font-size:12.2px;">Mirror Left &amp; Right Modifications</div>
<div class="a" style="left:315px;top:575px;width:792px;height:494px;background:#121212;border:1px solid #a4c2da;"></div>
<div class="a" style="left:316px;top:600px;width:774px;height:1px;background:#a4c2da;"></div>
<div class="a" style="left:455px;top:576px;width:1px;height:443px;background:#a4c2da;"></div>
<div class="a" style="left:505px;top:576px;width:1px;height:443px;background:#a4c2da;"></div>
<div class="a" style="left:555px;top:576px;width:1px;height:443px;background:#a4c2da;"></div>
<div class="a" style="left:605px;top:576px;width:1px;height:443px;background:#a4c2da;"></div>
<div class="a" style="left:1000px;top:576px;width:1px;height:443px;background:#a4c2da;"></div>
<div class="a" style="left:1050px;top:576px;width:1px;height:443px;background:#a4c2da;"></div>
<div class="a" style="left:1090px;top:576px;width:1px;height:443px;background:#a4c2da;"></div>
<div class="t" style="left:324px;top:579px;height:20px;line-height:20px;">Right Blend Shapes</div>
<div class="t" style="left:464px;top:579px;height:20px;line-height:20px;">Min</div>
<div class="t" style="left:514px;top:579px;height:20px;line-height:20px;">Max</div>
<div class="t" style="left:564px;top:579px;height:20px;line-height:20px;">Mult.</div>
<div class="t" style="left:614px;top:579px;height:20px;line-height:20px;">Visualiser</div>
<div class="t" style="left:1009px;top:579px;height:20px;line-height:20px;">Peak</div>
<div class="t" style="left:322px;top:602px;height:21px;line-height:21px;color:#e8e8e8;font-size:12px;">browInnerUp_R</div>
<div class="t" style="left:450.0px;top:602px;width:60px;height:21px;line-height:21px;text-align:center;color:#e8e8e8;">0</div>
<div class="t" style="left:500.0px;top:602px;width:60px;height:21px;line-height:21px;text-align:center;color:#e8e8e8;">100</div>
<div class="t" style="left:550.0px;top:602px;width:60px;height:21px;line-height:21px;text-align:center;color:#e8e8e8;">1</div>
<div class="a" style="left:609px;top:603px;width:16px;height:16px;background:#66b6ec;"></div>
<div class="a" style="left:615px;top:611px;width:4px;height:1px;background:#0a1a2c;"></div>
<div class="a" style="left:628px;top:603px;width:1px;height:16px;background:#5a5a5a;"></div>
<div class="t" style="left:772.5px;top:602px;width:60px;height:21px;line-height:21px;text-align:center;color:#e8e8e8;">0</div>
<div class="a" style="left:981px;top:603px;width:16px;height:16px;background:#66b6ec;"></div>
<div class="a" style="left:986px;top:611px;width:6px;height:1px;background:#0a1a2c;"></div>
<div class="a" style="left:988px;top:609px;width:1px;height:5px;background:#0a1a2c;"></div>
<div class="t" style="left:995.0px;top:602px;width:60px;height:21px;line-height:21px;text-align:center;color:#e8e8e8;">0</div>
<div class="a" style="left:1054px;top:602px;width:33px;height:18px;background:#66b6ec;"></div>
<div class="t" style="left:1054.0px;top:602px;width:33px;height:20px;line-height:20px;text-align:center;color:#163a64;font-size:12.5px;-webkit-text-stroke:0;transform:scaleX(0.86);">C</div>
<div class="a" style="left:316px;top:622px;width:774px;height:1px;background:#4e4e4e;"></div>
<div class="t" style="left:322px;top:624px;height:21px;line-height:21px;color:#e8e8e8;font-size:12px;">browOuterUp_R</div>
<div class="t" style="left:450.0px;top:624px;width:60px;height:21px;line-height:21px;text-align:center;color:#e8e8e8;">0</div>
<div class="t" style="left:500.0px;top:624px;width:60px;height:21px;line-height:21px;text-align:center;color:#e8e8e8;">100</div>
<div class="t" style="left:550.0px;top:624px;width:60px;height:21px;line-height:21px;text-align:center;color:#e8e8e8;">1</div>
<div class="a" style="left:609px;top:625px;width:16px;height:16px;background:#66b6ec;"></div>
<div class="a" style="left:615px;top:633px;width:4px;height:1px;background:#0a1a2c;"></div>
<div class="a" style="left:628px;top:625px;width:1px;height:16px;background:#5a5a5a;"></div>
<div class="t" style="left:772.5px;top:624px;width:60px;height:21px;line-height:21px;text-align:center;color:#e8e8e8;">0</div>
<div class="a" style="left:981px;top:625px;width:16px;height:16px;background:#66b6ec;"></div>
<div class="a" style="left:986px;top:633px;width:6px;height:1px;background:#0a1a2c;"></div>
<div class="a" style="left:988px;top:631px;width:1px;height:5px;background:#0a1a2c;"></div>
<div class="t" style="left:995.0px;top:624px;width:60px;height:21px;line-height:21px;text-align:center;color:#e8e8e8;">0</div>
<div class="a" style="left:1054px;top:624px;width:33px;height:18px;background:#66b6ec;"></div>
<div class="t" style="left:1054.0px;top:624px;width:33px;height:20px;line-height:20px;text-align:center;color:#163a64;font-size:12.5px;-webkit-text-stroke:0;transform:scaleX(0.86);">C</div>
<div class="a" style="left:316px;top:644px;width:774px;height:1px;background:#4e4e4e;"></div>
<div class="t" style="left:322px;top:646px;height:21px;line-height:21px;color:#e8e8e8;font-size:12px;">browDown_R</div>
<div class="t" style="left:450.0px;top:646px;width:60px;height:21px;line-height:21px;text-align:center;color:#e8e8e8;">0</div>
<div class="t" style="left:500.0px;top:646px;width:60px;height:21px;line-height:21px;text-align:center;color:#e8e8e8;">100</div>
<div class="t" style="left:550.0px;top:646px;width:60px;height:21px;line-height:21px;text-align:center;color:#e8e8e8;">1.3</div>
<div class="a" style="left:609px;top:647px;width:16px;height:16px;background:#66b6ec;"></div>
<div class="a" style="left:615px;top:655px;width:4px;height:1px;background:#0a1a2c;"></div>
<div class="a" style="left:628px;top:647px;width:1px;height:16px;background:#5a5a5a;"></div>
<div class="t" style="left:772.5px;top:646px;width:60px;height:21px;line-height:21px;text-align:center;color:#e8e8e8;">0</div>
<div class="a" style="left:981px;top:647px;width:16px;height:16px;background:#66b6ec;"></div>
<div class="a" style="left:986px;top:655px;width:6px;height:1px;background:#0a1a2c;"></div>
<div class="a" style="left:988px;top:653px;width:1px;height:5px;background:#0a1a2c;"></div>
<div class="t" style="left:995.0px;top:646px;width:60px;height:21px;line-height:21px;text-align:center;color:#e8e8e8;">0</div>
<div class="a" style="left:1054px;top:646px;width:33px;height:18px;background:#66b6ec;"></div>
<div class="t" style="left:1054.0px;top:646px;width:33px;height:20px;line-height:20px;text-align:center;color:#163a64;font-size:12.5px;-webkit-text-stroke:0;transform:scaleX(0.86);">C</div>
<div class="a" style="left:316px;top:666px;width:774px;height:1px;background:#4e4e4e;"></div>
<div class="t" style="left:322px;top:668px;height:21px;line-height:21px;color:#e8e8e8;font-size:12px;">eyeLookUp_R</div>
<div class="t" style="left:450.0px;top:668px;width:60px;height:21px;line-height:21px;text-align:center;color:#e8e8e8;">0</div>
<div class="t" style="left:500.0px;top:668px;width:60px;height:21px;line-height:21px;text-align:center;color:#e8e8e8;">100</div>
<div class="t" style="left:550.0px;top:668px;width:60px;height:21px;line-height:21px;text-align:center;color:#e8e8e8;">1</div>
<div class="a" style="left:609px;top:669px;width:16px;height:16px;background:#66b6ec;"></div>
<div class="a" style="left:615px;top:677px;width:4px;height:1px;background:#0a1a2c;"></div>
<div class="a" style="left:628px;top:669px;width:1px;height:16px;background:#5a5a5a;"></div>
<div class="t" style="left:772.5px;top:668px;width:60px;height:21px;line-height:21px;text-align:center;color:#e8e8e8;">0</div>
<div class="a" style="left:981px;top:669px;width:16px;height:16px;background:#66b6ec;"></div>
<div class="a" style="left:986px;top:677px;width:6px;height:1px;background:#0a1a2c;"></div>
<div class="a" style="left:988px;top:675px;width:1px;height:5px;background:#0a1a2c;"></div>
<div class="t" style="left:995.0px;top:668px;width:60px;height:21px;line-height:21px;text-align:center;color:#e8e8e8;">0</div>
<div class="a" style="left:1054px;top:668px;width:33px;height:18px;background:#66b6ec;"></div>
<div class="t" style="left:1054.0px;top:668px;width:33px;height:20px;line-height:20px;text-align:center;color:#163a64;font-size:12.5px;-webkit-text-stroke:0;transform:scaleX(0.86);">C</div>
<div class="a" style="left:316px;top:688px;width:774px;height:1px;background:#4e4e4e;"></div>
<div class="t" style="left:322px;top:690px;height:21px;line-height:21px;color:#e8e8e8;font-size:12px;">eyeLookIn_R</div>
<div class="t" style="left:450.0px;top:690px;width:60px;height:21px;line-height:21px;text-align:center;color:#e8e8e8;">0</div>
<div class="t" style="left:500.0px;top:690px;width:60px;height:21px;line-height:21px;text-align:center;color:#e8e8e8;">100</div>
<div class="t" style="left:550.0px;top:690px;width:60px;height:21px;line-height:21px;text-align:center;color:#e8e8e8;">1</div>
<div class="a" style="left:609px;top:691px;width:16px;height:16px;background:#66b6ec;"></div>
<div class="a" style="left:615px;top:699px;width:4px;height:1px;background:#0a1a2c;"></div>
<div class="a" style="left:628px;top:691px;width:1px;height:16px;background:#5a5a5a;"></div>
<div class="t" style="left:772.5px;top:690px;width:60px;height:21px;line-height:21px;text-align:center;color:#e8e8e8;">0</div>
<div class="a" style="left:981px;top:691px;width:16px;height:16px;background:#66b6ec;"></div>
<div class="a" style="left:986px;top:699px;width:6px;height:1px;background:#0a1a2c;"></div>
<div class="a" style="left:988px;top:697px;width:1px;height:5px;background:#0a1a2c;"></div>
<div class="t" style="left:995.0px;top:690px;width:60px;height:21px;line-height:21px;text-align:center;color:#e8e8e8;">0</div>
<div class="a" style="left:1054px;top:690px;width:33px;height:18px;background:#66b6ec;"></div>
<div class="t" style="left:1054.0px;top:690px;width:33px;height:20px;line-height:20px;text-align:center;color:#163a64;font-size:12.5px;-webkit-text-stroke:0;transform:scaleX(0.86);">C</div>
<div class="a" style="left:316px;top:710px;width:774px;height:1px;background:#4e4e4e;"></div>
<div class="t" style="left:322px;top:712px;height:21px;line-height:21px;color:#e8e8e8;font-size:12px;">eyeLookOut_R</div>
<div class="t" style="left:450.0px;top:712px;width:60px;height:21px;line-height:21px;text-align:center;color:#e8e8e8;">0</div>
<div class="t" style="left:500.0px;top:712px;width:60px;height:21px;line-height:21px;text-align:center;color:#e8e8e8;">100</div>
<div class="t" style="left:550.0px;top:712px;width:60px;height:21px;line-height:21px;text-align:center;color:#e8e8e8;">1</div>
<div class="a" style="left:609px;top:713px;width:16px;height:16px;background:#66b6ec;"></div>
<div class="a" style="left:615px;top:721px;width:4px;height:1px;background:#0a1a2c;"></div>
<div class="a" style="left:628px;top:713px;width:1px;height:16px;background:#5a5a5a;"></div>
<div class="t" style="left:772.5px;top:712px;width:60px;height:21px;line-height:21px;text-align:center;color:#e8e8e8;">0</div>
<div class="a" style="left:981px;top:713px;width:16px;height:16px;background:#66b6ec;"></div>
<div class="a" style="left:986px;top:721px;width:6px;height:1px;background:#0a1a2c;"></div>
<div class="a" style="left:988px;top:719px;width:1px;height:5px;background:#0a1a2c;"></div>
<div class="t" style="left:995.0px;top:712px;width:60px;height:21px;line-height:21px;text-align:center;color:#e8e8e8;">0</div>
<div class="a" style="left:1054px;top:712px;width:33px;height:18px;background:#66b6ec;"></div>
<div class="t" style="left:1054.0px;top:712px;width:33px;height:20px;line-height:20px;text-align:center;color:#163a64;font-size:12.5px;-webkit-text-stroke:0;transform:scaleX(0.86);">C</div>
<div class="a" style="left:316px;top:732px;width:774px;height:1px;background:#4e4e4e;"></div>
<div class="t" style="left:322px;top:734px;height:21px;line-height:21px;color:#e8e8e8;font-size:12px;">eyeLookDown_R</div>
<div class="t" style="left:450.0px;top:734px;width:60px;height:21px;line-height:21px;text-align:center;color:#e8e8e8;">0</div>
<div class="t" style="left:500.0px;top:734px;width:60px;height:21px;line-height:21px;text-align:center;color:#e8e8e8;">100</div>
<div class="t" style="left:550.0px;top:734px;width:60px;height:21px;line-height:21px;text-align:center;color:#e8e8e8;">1.2</div>
<div class="a" style="left:609px;top:735px;width:16px;height:16px;background:#66b6ec;"></div>
<div class="a" style="left:615px;top:743px;width:4px;height:1px;background:#0a1a2c;"></div>
<div class="a" style="left:628px;top:735px;width:1px;height:16px;background:#5a5a5a;"></div>
<div class="t" style="left:772.5px;top:734px;width:60px;height:21px;line-height:21px;text-align:center;color:#e8e8e8;">0</div>
<div class="a" style="left:981px;top:735px;width:16px;height:16px;background:#66b6ec;"></div>
<div class="a" style="left:986px;top:743px;width:6px;height:1px;background:#0a1a2c;"></div>
<div class="a" style="left:988px;top:741px;width:1px;height:5px;background:#0a1a2c;"></div>
<div class="t" style="left:995.0px;top:734px;width:60px;height:21px;line-height:21px;text-align:center;color:#e8e8e8;">0</div>
<div class="a" style="left:1054px;top:734px;width:33px;height:18px;background:#66b6ec;"></div>
<div class="t" style="left:1054.0px;top:734px;width:33px;height:20px;line-height:20px;text-align:center;color:#163a64;font-size:12.5px;-webkit-text-stroke:0;transform:scaleX(0.86);">C</div>
<div class="a" style="left:316px;top:754px;width:774px;height:1px;background:#4e4e4e;"></div>
<div class="t" style="left:322px;top:756px;height:21px;line-height:21px;color:#e8e8e8;font-size:12px;">eyeBlink_R</div>
<div class="t" style="left:450.0px;top:756px;width:60px;height:21px;line-height:21px;text-align:center;color:#e8e8e8;">0</div>
<div class="t" style="left:500.0px;top:756px;width:60px;height:21px;line-height:21px;text-align:center;color:#e8e8e8;">100</div>
<div class="t" style="left:550.0px;top:756px;width:60px;height:21px;line-height:21px;text-align:center;color:#e8e8e8;">1.5</div>
<div class="a" style="left:609px;top:757px;width:16px;height:16px;background:#66b6ec;"></div>
<div class="a" style="left:615px;top:765px;width:4px;height:1px;background:#0a1a2c;"></div>
<div class="a" style="left:628px;top:757px;width:1px;height:16px;background:#5a5a5a;"></div>
<div class="t" style="left:772.5px;top:756px;width:60px;height:21px;line-height:21px;text-align:center;color:#e8e8e8;">0</div>
<div class="a" style="left:981px;top:757px;width:16px;height:16px;background:#66b6ec;"></div>
<div class="a" style="left:986px;top:765px;width:6px;height:1px;background:#0a1a2c;"></div>
<div class="a" style="left:988px;top:763px;width:1px;height:5px;background:#0a1a2c;"></div>
<div class="t" style="left:995.0px;top:756px;width:60px;height:21px;line-height:21px;text-align:center;color:#e8e8e8;">0</div>
<div class="a" style="left:1054px;top:756px;width:33px;height:18px;background:#66b6ec;"></div>
<div class="t" style="left:1054.0px;top:756px;width:33px;height:20px;line-height:20px;text-align:center;color:#163a64;font-size:12.5px;-webkit-text-stroke:0;transform:scaleX(0.86);">C</div>
<div class="a" style="left:316px;top:776px;width:774px;height:1px;background:#4e4e4e;"></div>
<div class="t" style="left:322px;top:778px;height:21px;line-height:21px;color:#e8e8e8;font-size:12px;">eyeSquint_R</div>
<div class="t" style="left:450.0px;top:778px;width:60px;height:21px;line-height:21px;text-align:center;color:#e8e8e8;">0</div>
<div class="t" style="left:500.0px;top:778px;width:60px;height:21px;line-height:21px;text-align:center;color:#e8e8e8;">100</div>
<div class="t" style="left:550.0px;top:778px;width:60px;height:21px;line-height:21px;text-align:center;color:#e8e8e8;">1</div>
<div class="a" style="left:609px;top:779px;width:16px;height:16px;background:#66b6ec;"></div>
<div class="a" style="left:615px;top:787px;width:4px;height:1px;background:#0a1a2c;"></div>
<div class="a" style="left:628px;top:779px;width:1px;height:16px;background:#5a5a5a;"></div>
<div class="t" style="left:772.5px;top:778px;width:60px;height:21px;line-height:21px;text-align:center;color:#e8e8e8;">0</div>
<div class="a" style="left:981px;top:779px;width:16px;height:16px;background:#66b6ec;"></div>
<div class="a" style="left:986px;top:787px;width:6px;height:1px;background:#0a1a2c;"></div>
<div class="a" style="left:988px;top:785px;width:1px;height:5px;background:#0a1a2c;"></div>
<div class="t" style="left:995.0px;top:778px;width:60px;height:21px;line-height:21px;text-align:center;color:#e8e8e8;">0</div>
<div class="a" style="left:1054px;top:778px;width:33px;height:18px;background:#66b6ec;"></div>
<div class="t" style="left:1054.0px;top:778px;width:33px;height:20px;line-height:20px;text-align:center;color:#163a64;font-size:12.5px;-webkit-text-stroke:0;transform:scaleX(0.86);">C</div>
<div class="a" style="left:316px;top:798px;width:774px;height:1px;background:#4e4e4e;"></div>
<div class="t" style="left:322px;top:800px;height:21px;line-height:21px;color:#e8e8e8;font-size:12px;">eyeWide_R</div>
<div class="t" style="left:450.0px;top:800px;width:60px;height:21px;line-height:21px;text-align:center;color:#e8e8e8;">0</div>
<div class="t" style="left:500.0px;top:800px;width:60px;height:21px;line-height:21px;text-align:center;color:#e8e8e8;">100</div>
<div class="t" style="left:550.0px;top:800px;width:60px;height:21px;line-height:21px;text-align:center;color:#e8e8e8;">1.2</div>
<div class="a" style="left:609px;top:801px;width:16px;height:16px;background:#66b6ec;"></div>
<div class="a" style="left:615px;top:809px;width:4px;height:1px;background:#0a1a2c;"></div>
<div class="a" style="left:628px;top:801px;width:1px;height:16px;background:#5a5a5a;"></div>
<div class="t" style="left:772.5px;top:800px;width:60px;height:21px;line-height:21px;text-align:center;color:#e8e8e8;">0</div>
<div class="a" style="left:981px;top:801px;width:16px;height:16px;background:#66b6ec;"></div>
<div class="a" style="left:986px;top:809px;width:6px;height:1px;background:#0a1a2c;"></div>
<div class="a" style="left:988px;top:807px;width:1px;height:5px;background:#0a1a2c;"></div>
<div class="t" style="left:995.0px;top:800px;width:60px;height:21px;line-height:21px;text-align:center;color:#e8e8e8;">0</div>
<div class="a" style="left:1054px;top:800px;width:33px;height:18px;background:#66b6ec;"></div>
<div class="t" style="left:1054.0px;top:800px;width:33px;height:20px;line-height:20px;text-align:center;color:#163a64;font-size:12.5px;-webkit-text-stroke:0;transform:scaleX(0.86);">C</div>
<div class="a" style="left:316px;top:820px;width:774px;height:1px;background:#4e4e4e;"></div>
<div class="t" style="left:322px;top:822px;height:21px;line-height:21px;color:#e8e8e8;font-size:12px;">noseSneer_R</div>
<div class="t" style="left:450.0px;top:822px;width:60px;height:21px;line-height:21px;text-align:center;color:#e8e8e8;">0</div>
<div class="t" style="left:500.0px;top:822px;width:60px;height:21px;line-height:21px;text-align:center;color:#e8e8e8;">100</div>
<div class="t" style="left:550.0px;top:822px;width:60px;height:21px;line-height:21px;text-align:center;color:#e8e8e8;">1</div>
<div class="a" style="left:609px;top:823px;width:16px;height:16px;background:#66b6ec;"></div>
<div class="a" style="left:615px;top:831px;width:4px;height:1px;background:#0a1a2c;"></div>
<div class="a" style="left:628px;top:823px;width:1px;height:16px;background:#5a5a5a;"></div>
<div class="t" style="left:772.5px;top:822px;width:60px;height:21px;line-height:21px;text-align:center;color:#e8e8e8;">0</div>
<div class="a" style="left:981px;top:823px;width:16px;height:16px;background:#66b6ec;"></div>
<div class="a" style="left:986px;top:831px;width:6px;height:1px;background:#0a1a2c;"></div>
<div class="a" style="left:988px;top:829px;width:1px;height:5px;background:#0a1a2c;"></div>
<div class="t" style="left:995.0px;top:822px;width:60px;height:21px;line-height:21px;text-align:center;color:#e8e8e8;">0</div>
<div class="a" style="left:1054px;top:822px;width:33px;height:18px;background:#66b6ec;"></div>
<div class="t" style="left:1054.0px;top:822px;width:33px;height:20px;line-height:20px;text-align:center;color:#163a64;font-size:12.5px;-webkit-text-stroke:0;transform:scaleX(0.86);">C</div>
<div class="a" style="left:316px;top:842px;width:774px;height:1px;background:#4e4e4e;"></div>
<div class="t" style="left:322px;top:844px;height:21px;line-height:21px;color:#e8e8e8;font-size:12px;">cheekSquint_R</div>
<div class="t" style="left:450.0px;top:844px;width:60px;height:21px;line-height:21px;text-align:center;color:#e8e8e8;">0</div>
<div class="t" style="left:500.0px;top:844px;width:60px;height:21px;line-height:21px;text-align:center;color:#e8e8e8;">100</div>
<div class="t" style="left:550.0px;top:844px;width:60px;height:21px;line-height:21px;text-align:center;color:#e8e8e8;">1</div>
<div class="a" style="left:609px;top:845px;width:16px;height:16px;background:#66b6ec;"></div>
<div class="a" style="left:615px;top:853px;width:4px;height:1px;background:#0a1a2c;"></div>
<div class="a" style="left:628px;top:845px;width:1px;height:16px;background:#5a5a5a;"></div>
<div class="t" style="left:772.5px;top:844px;width:60px;height:21px;line-height:21px;text-align:center;color:#e8e8e8;">0</div>
<div class="a" style="left:981px;top:845px;width:16px;height:16px;background:#66b6ec;"></div>
<div class="a" style="left:986px;top:853px;width:6px;height:1px;background:#0a1a2c;"></div>
<div class="a" style="left:988px;top:851px;width:1px;height:5px;background:#0a1a2c;"></div>
<div class="t" style="left:995.0px;top:844px;width:60px;height:21px;line-height:21px;text-align:center;color:#e8e8e8;">0</div>
<div class="a" style="left:1054px;top:844px;width:33px;height:18px;background:#66b6ec;"></div>
<div class="t" style="left:1054.0px;top:844px;width:33px;height:20px;line-height:20px;text-align:center;color:#163a64;font-size:12.5px;-webkit-text-stroke:0;transform:scaleX(0.86);">C</div>
<div class="a" style="left:316px;top:864px;width:774px;height:1px;background:#4e4e4e;"></div>
<div class="t" style="left:322px;top:866px;height:21px;line-height:21px;color:#e8e8e8;font-size:12px;">mouthUpperUp_R</div>
<div class="t" style="left:450.0px;top:866px;width:60px;height:21px;line-height:21px;text-align:center;color:#e8e8e8;">0</div>
<div class="t" style="left:500.0px;top:866px;width:60px;height:21px;line-height:21px;text-align:center;color:#e8e8e8;">100</div>
<div class="t" style="left:550.0px;top:866px;width:60px;height:21px;line-height:21px;text-align:center;color:#e8e8e8;">1</div>
<div class="a" style="left:609px;top:867px;width:16px;height:16px;background:#66b6ec;"></div>
<div class="a" style="left:615px;top:875px;width:4px;height:1px;background:#0a1a2c;"></div>
<div class="a" style="left:628px;top:867px;width:1px;height:16px;background:#5a5a5a;"></div>
<div class="t" style="left:772.5px;top:866px;width:60px;height:21px;line-height:21px;text-align:center;color:#e8e8e8;">0</div>
<div class="a" style="left:981px;top:867px;width:16px;height:16px;background:#66b6ec;"></div>
<div class="a" style="left:986px;top:875px;width:6px;height:1px;background:#0a1a2c;"></div>
<div class="a" style="left:988px;top:873px;width:1px;height:5px;background:#0a1a2c;"></div>
<div class="t" style="left:995.0px;top:866px;width:60px;height:21px;line-height:21px;text-align:center;color:#e8e8e8;">0</div>
<div class="a" style="left:1054px;top:866px;width:33px;height:18px;background:#66b6ec;"></div>
<div class="t" style="left:1054.0px;top:866px;width:33px;height:20px;line-height:20px;text-align:center;color:#163a64;font-size:12.5px;-webkit-text-stroke:0;transform:scaleX(0.86);">C</div>
<div class="a" style="left:316px;top:886px;width:774px;height:1px;background:#4e4e4e;"></div>
<div class="t" style="left:322px;top:888px;height:21px;line-height:21px;color:#e8e8e8;font-size:12px;">mouthDimple_R</div>
<div class="t" style="left:450.0px;top:888px;width:60px;height:21px;line-height:21px;text-align:center;color:#e8e8e8;">0</div>
<div class="t" style="left:500.0px;top:888px;width:60px;height:21px;line-height:21px;text-align:center;color:#e8e8e8;">100</div>
<div class="t" style="left:550.0px;top:888px;width:60px;height:21px;line-height:21px;text-align:center;color:#e8e8e8;">1</div>
<div class="a" style="left:609px;top:889px;width:16px;height:16px;background:#66b6ec;"></div>
<div class="a" style="left:615px;top:897px;width:4px;height:1px;background:#0a1a2c;"></div>
<div class="a" style="left:628px;top:889px;width:1px;height:16px;background:#5a5a5a;"></div>
<div class="t" style="left:772.5px;top:888px;width:60px;height:21px;line-height:21px;text-align:center;color:#e8e8e8;">0</div>
<div class="a" style="left:981px;top:889px;width:16px;height:16px;background:#66b6ec;"></div>
<div class="a" style="left:986px;top:897px;width:6px;height:1px;background:#0a1a2c;"></div>
<div class="a" style="left:988px;top:895px;width:1px;height:5px;background:#0a1a2c;"></div>
<div class="t" style="left:995.0px;top:888px;width:60px;height:21px;line-height:21px;text-align:center;color:#e8e8e8;">0</div>
<div class="a" style="left:1054px;top:888px;width:33px;height:18px;background:#66b6ec;"></div>
<div class="t" style="left:1054.0px;top:888px;width:33px;height:20px;line-height:20px;text-align:center;color:#163a64;font-size:12.5px;-webkit-text-stroke:0;transform:scaleX(0.86);">C</div>
<div class="a" style="left:316px;top:908px;width:774px;height:1px;background:#4e4e4e;"></div>
<div class="t" style="left:322px;top:910px;height:21px;line-height:21px;color:#e8e8e8;font-size:12px;">mouthFrown_R</div>
<div class="t" style="left:450.0px;top:910px;width:60px;height:21px;line-height:21px;text-align:center;color:#e8e8e8;">0</div>
<div class="t" style="left:500.0px;top:910px;width:60px;height:21px;line-height:21px;text-align:center;color:#e8e8e8;">100</div>
<div class="t" style="left:550.0px;top:910px;width:60px;height:21px;line-height:21px;text-align:center;color:#e8e8e8;">2.34</div>
<div class="a" style="left:609px;top:911px;width:16px;height:16px;background:#66b6ec;"></div>
<div class="a" style="left:615px;top:919px;width:4px;height:1px;background:#0a1a2c;"></div>
<div class="a" style="left:628px;top:911px;width:1px;height:16px;background:#5a5a5a;"></div>
<div class="t" style="left:772.5px;top:910px;width:60px;height:21px;line-height:21px;text-align:center;color:#e8e8e8;">0</div>
<div class="a" style="left:981px;top:911px;width:16px;height:16px;background:#66b6ec;"></div>
<div class="a" style="left:986px;top:919px;width:6px;height:1px;background:#0a1a2c;"></div>
<div class="a" style="left:988px;top:917px;width:1px;height:5px;background:#0a1a2c;"></div>
<div class="t" style="left:995.0px;top:910px;width:60px;height:21px;line-height:21px;text-align:center;color:#e8e8e8;">0</div>
<div class="a" style="left:1054px;top:910px;width:33px;height:18px;background:#66b6ec;"></div>
<div class="t" style="left:1054.0px;top:910px;width:33px;height:20px;line-height:20px;text-align:center;color:#163a64;font-size:12.5px;-webkit-text-stroke:0;transform:scaleX(0.86);">C</div>
<div class="a" style="left:316px;top:930px;width:774px;height:1px;background:#4e4e4e;"></div>
<div class="t" style="left:322px;top:932px;height:21px;line-height:21px;color:#e8e8e8;font-size:12px;">mouthSmile_R</div>
<div class="t" style="left:450.0px;top:932px;width:60px;height:21px;line-height:21px;text-align:center;color:#e8e8e8;">0</div>
<div class="t" style="left:500.0px;top:932px;width:60px;height:21px;line-height:21px;text-align:center;color:#e8e8e8;">100</div>
<div class="t" style="left:550.0px;top:932px;width:60px;height:21px;line-height:21px;text-align:center;color:#e8e8e8;">1.5</div>
<div class="a" style="left:609px;top:933px;width:16px;height:16px;background:#66b6ec;"></div>
<div class="a" style="left:615px;top:941px;width:4px;height:1px;background:#0a1a2c;"></div>
<div class="a" style="left:628px;top:933px;width:1px;height:16px;background:#5a5a5a;"></div>
<div class="t" style="left:772.5px;top:932px;width:60px;height:21px;line-height:21px;text-align:center;color:#e8e8e8;">0</div>
<div class="a" style="left:981px;top:933px;width:16px;height:16px;background:#66b6ec;"></div>
<div class="a" style="left:986px;top:941px;width:6px;height:1px;background:#0a1a2c;"></div>
<div class="a" style="left:988px;top:939px;width:1px;height:5px;background:#0a1a2c;"></div>
<div class="t" style="left:995.0px;top:932px;width:60px;height:21px;line-height:21px;text-align:center;color:#e8e8e8;">0</div>
<div class="a" style="left:1054px;top:932px;width:33px;height:18px;background:#66b6ec;"></div>
<div class="t" style="left:1054.0px;top:932px;width:33px;height:20px;line-height:20px;text-align:center;color:#163a64;font-size:12.5px;-webkit-text-stroke:0;transform:scaleX(0.86);">C</div>
<div class="a" style="left:316px;top:952px;width:774px;height:1px;background:#4e4e4e;"></div>
<div class="t" style="left:322px;top:954px;height:21px;line-height:21px;color:#e8e8e8;font-size:12px;">mouthPress_R</div>
<div class="t" style="left:450.0px;top:954px;width:60px;height:21px;line-height:21px;text-align:center;color:#e8e8e8;">0</div>
<div class="t" style="left:500.0px;top:954px;width:60px;height:21px;line-height:21px;text-align:center;color:#e8e8e8;">100</div>
<div class="t" style="left:550.0px;top:954px;width:60px;height:21px;line-height:21px;text-align:center;color:#e8e8e8;">1</div>
<div class="a" style="left:609px;top:955px;width:16px;height:16px;background:#66b6ec;"></div>
<div class="a" style="left:615px;top:963px;width:4px;height:1px;background:#0a1a2c;"></div>
<div class="a" style="left:628px;top:955px;width:1px;height:16px;background:#5a5a5a;"></div>
<div class="t" style="left:772.5px;top:954px;width:60px;height:21px;line-height:21px;text-align:center;color:#e8e8e8;">0</div>
<div class="a" style="left:981px;top:955px;width:16px;height:16px;background:#66b6ec;"></div>
<div class="a" style="left:986px;top:963px;width:6px;height:1px;background:#0a1a2c;"></div>
<div class="a" style="left:988px;top:961px;width:1px;height:5px;background:#0a1a2c;"></div>
<div class="t" style="left:995.0px;top:954px;width:60px;height:21px;line-height:21px;text-align:center;color:#e8e8e8;">0</div>
<div class="a" style="left:1054px;top:954px;width:33px;height:18px;background:#66b6ec;"></div>
<div class="t" style="left:1054.0px;top:954px;width:33px;height:20px;line-height:20px;text-align:center;color:#163a64;font-size:12.5px;-webkit-text-stroke:0;transform:scaleX(0.86);">C</div>
<div class="a" style="left:316px;top:974px;width:774px;height:1px;background:#4e4e4e;"></div>
<div class="t" style="left:322px;top:976px;height:21px;line-height:21px;color:#e8e8e8;font-size:12px;">mouthStretch_R</div>
<div class="t" style="left:450.0px;top:976px;width:60px;height:21px;line-height:21px;text-align:center;color:#e8e8e8;">0</div>
<div class="t" style="left:500.0px;top:976px;width:60px;height:21px;line-height:21px;text-align:center;color:#e8e8e8;">100</div>
<div class="t" style="left:550.0px;top:976px;width:60px;height:21px;line-height:21px;text-align:center;color:#e8e8e8;">1</div>
<div class="a" style="left:609px;top:977px;width:16px;height:16px;background:#66b6ec;"></div>
<div class="a" style="left:615px;top:985px;width:4px;height:1px;background:#0a1a2c;"></div>
<div class="a" style="left:628px;top:977px;width:1px;height:16px;background:#5a5a5a;"></div>
<div class="t" style="left:772.5px;top:976px;width:60px;height:21px;line-height:21px;text-align:center;color:#e8e8e8;">0</div>
<div class="a" style="left:981px;top:977px;width:16px;height:16px;background:#66b6ec;"></div>
<div class="a" style="left:986px;top:985px;width:6px;height:1px;background:#0a1a2c;"></div>
<div class="a" style="left:988px;top:983px;width:1px;height:5px;background:#0a1a2c;"></div>
<div class="t" style="left:995.0px;top:976px;width:60px;height:21px;line-height:21px;text-align:center;color:#e8e8e8;">0</div>
<div class="a" style="left:1054px;top:976px;width:33px;height:18px;background:#66b6ec;"></div>
<div class="t" style="left:1054.0px;top:976px;width:33px;height:20px;line-height:20px;text-align:center;color:#163a64;font-size:12.5px;-webkit-text-stroke:0;transform:scaleX(0.86);">C</div>
<div class="a" style="left:316px;top:996px;width:774px;height:1px;background:#4e4e4e;"></div>
<div class="t" style="left:322px;top:998px;height:21px;line-height:21px;color:#e8e8e8;font-size:12px;">mouthLowerDown_R</div>
<div class="t" style="left:450.0px;top:998px;width:60px;height:21px;line-height:21px;text-align:center;color:#e8e8e8;">0</div>
<div class="t" style="left:500.0px;top:998px;width:60px;height:21px;line-height:21px;text-align:center;color:#e8e8e8;">100</div>
<div class="t" style="left:550.0px;top:998px;width:60px;height:21px;line-height:21px;text-align:center;color:#e8e8e8;">1.5</div>
<div class="a" style="left:609px;top:999px;width:16px;height:16px;background:#66b6ec;"></div>
<div class="a" style="left:615px;top:1007px;width:4px;height:1px;background:#0a1a2c;"></div>
<div class="a" style="left:628px;top:999px;width:1px;height:16px;background:#5a5a5a;"></div>
<div class="t" style="left:772.5px;top:998px;width:60px;height:21px;line-height:21px;text-align:center;color:#e8e8e8;">0</div>
<div class="a" style="left:981px;top:999px;width:16px;height:16px;background:#66b6ec;"></div>
<div class="a" style="left:986px;top:1007px;width:6px;height:1px;background:#0a1a2c;"></div>
<div class="a" style="left:988px;top:1005px;width:1px;height:5px;background:#0a1a2c;"></div>
<div class="t" style="left:995.0px;top:998px;width:60px;height:21px;line-height:21px;text-align:center;color:#e8e8e8;">0</div>
<div class="a" style="left:1054px;top:998px;width:33px;height:18px;background:#66b6ec;"></div>
<div class="t" style="left:1054.0px;top:998px;width:33px;height:20px;line-height:20px;text-align:center;color:#163a64;font-size:12.5px;-webkit-text-stroke:0;transform:scaleX(0.86);">C</div>
<div class="a" style="left:316px;top:1018px;width:775px;height:1px;background:#4e4e4e;"></div>
<div class="a" style="left:1114px;top:575px;width:797px;height:494px;background:#121212;border:1px solid #a4c2da;"></div>
<div class="a" style="left:1115px;top:600px;width:779px;height:1px;background:#a4c2da;"></div>
<div class="a" style="left:1254px;top:576px;width:1px;height:443px;background:#a4c2da;"></div>
<div class="a" style="left:1304px;top:576px;width:1px;height:443px;background:#a4c2da;"></div>
<div class="a" style="left:1354px;top:576px;width:1px;height:443px;background:#a4c2da;"></div>
<div class="a" style="left:1404px;top:576px;width:1px;height:443px;background:#a4c2da;"></div>
<div class="a" style="left:1804px;top:576px;width:1px;height:443px;background:#a4c2da;"></div>
<div class="a" style="left:1854px;top:576px;width:1px;height:443px;background:#a4c2da;"></div>
<div class="a" style="left:1894px;top:576px;width:1px;height:443px;background:#a4c2da;"></div>
<div class="t" style="left:1123px;top:579px;height:20px;line-height:20px;">Left Blend Shapes</div>
<div class="t" style="left:1263px;top:579px;height:20px;line-height:20px;">Min</div>
<div class="t" style="left:1313px;top:579px;height:20px;line-height:20px;">Max</div>
<div class="t" style="left:1363px;top:579px;height:20px;line-height:20px;">Mult.</div>
<div class="t" style="left:1413px;top:579px;height:20px;line-height:20px;">Visualiser</div>
<div class="t" style="left:1813px;top:579px;height:20px;line-height:20px;">Peak</div>
<div class="a" style="left:1115px;top:600px;width:780px;height:22px;background:#66b6ec;"></div>
<div class="t" style="left:1121px;top:602px;height:21px;line-height:21px;color:#173049;font-size:12px;">browInnerUp_L</div>
<div class="t" style="left:1249.0px;top:602px;width:60px;height:21px;line-height:21px;text-align:center;color:#173049;">0</div>
<div class="t" style="left:1299.0px;top:602px;width:60px;height:21px;line-height:21px;text-align:center;color:#173049;">100</div>
<div class="t" style="left:1349.0px;top:602px;width:60px;height:21px;line-height:21px;text-align:center;color:#173049;">1</div>
<div class="a" style="left:1408px;top:603px;width:14px;height:14px;background:#66b6ec;border:1px solid #0a1a30;"></div>
<div class="a" style="left:1414px;top:611px;width:4px;height:1px;background:#0a1a2c;"></div>
<div class="a" style="left:1427px;top:603px;width:1px;height:16px;background:#10304c;"></div>
<div class="t" style="left:1574.0px;top:602px;width:60px;height:21px;line-height:21px;text-align:center;color:#173049;">0</div>
<div class="a" style="left:1785px;top:603px;width:14px;height:14px;background:#66b6ec;border:1px solid #0a1a30;"></div>
<div class="a" style="left:1790px;top:611px;width:6px;height:1px;background:#0a1a2c;"></div>
<div class="a" style="left:1792px;top:609px;width:1px;height:5px;background:#0a1a2c;"></div>
<div class="t" style="left:1799.0px;top:602px;width:60px;height:21px;line-height:21px;text-align:center;color:#173049;">0</div>
<div class="a" style="left:1858px;top:602px;width:31px;height:16px;background:#66b6ec;border:1px solid #0a1a30;"></div>
<div class="t" style="left:1858.0px;top:602px;width:33px;height:20px;line-height:20px;text-align:center;color:#163a64;font-size:12.5px;-webkit-text-stroke:0;transform:scaleX(0.86);">C</div>
<div class="a" style="left:1115px;top:622px;width:779px;height:1px;background:#4e4e4e;"></div>
<div class="t" style="left:1121px;top:624px;height:21px;line-height:21px;color:#e8e8e8;font-size:12px;">browOuterUp_L</div>
<div class="t" style="left:1249.0px;top:624px;width:60px;height:21px;line-height:21px;text-align:center;color:#e8e8e8;">0</div>
<div class="t" style="left:1299.0px;top:624px;width:60px;height:21px;line-height:21px;text-align:center;color:#e8e8e8;">100</div>
<div class="t" style="left:1349.0px;top:624px;width:60px;height:21px;line-height:21px;text-align:center;color:#e8e8e8;">1</div>
<div class="a" style="left:1408px;top:625px;width:16px;height:16px;background:#66b6ec;"></div>
<div class="a" style="left:1414px;top:633px;width:4px;height:1px;background:#0a1a2c;"></div>
<div class="a" style="left:1427px;top:625px;width:1px;height:16px;background:#5a5a5a;"></div>
<div class="t" style="left:1574.0px;top:624px;width:60px;height:21px;line-height:21px;text-align:center;color:#e8e8e8;">0</div>
<div class="a" style="left:1785px;top:625px;width:16px;height:16px;background:#66b6ec;"></div>
<div class="a" style="left:1790px;top:633px;width:6px;height:1px;background:#0a1a2c;"></div>
<div class="a" style="left:1792px;top:631px;width:1px;height:5px;background:#0a1a2c;"></div>
<div class="t" style="left:1799.0px;top:624px;width:60px;height:21px;line-height:21px;text-align:center;color:#e8e8e8;">0</div>
<div class="a" style="left:1858px;top:624px;width:33px;height:18px;background:#66b6ec;"></div>
<div class="t" style="left:1858.0px;top:624px;width:33px;height:20px;line-height:20px;text-align:center;color:#163a64;font-size:12.5px;-webkit-text-stroke:0;transform:scaleX(0.86);">C</div>
<div class="a" style="left:1115px;top:644px;width:779px;height:1px;background:#4e4e4e;"></div>
<div class="t" style="left:1121px;top:646px;height:21px;line-height:21px;color:#e8e8e8;font-size:12px;">browDown_L</div>
<div class="t" style="left:1249.0px;top:646px;width:60px;height:21px;line-height:21px;text-align:center;color:#e8e8e8;">0</div>
<div class="t" style="left:1299.0px;top:646px;width:60px;height:21px;line-height:21px;text-align:center;color:#e8e8e8;">100</div>
<div class="t" style="left:1349.0px;top:646px;width:60px;height:21px;line-height:21px;text-align:center;color:#e8e8e8;">1.3</div>
<div class="a" style="left:1408px;top:647px;width:16px;height:16px;background:#66b6ec;"></div>
<div class="a" style="left:1414px;top:655px;width:4px;height:1px;background:#0a1a2c;"></div>
<div class="a" style="left:1427px;top:647px;width:1px;height:16px;background:#5a5a5a;"></div>
<div class="t" style="left:1574.0px;top:646px;width:60px;height:21px;line-height:21px;text-align:center;color:#e8e8e8;">0</div>
<div class="a" style="left:1785px;top:647px;width:16px;height:16px;background:#66b6ec;"></div>
<div class="a" style="left:1790px;top:655px;width:6px;height:1px;background:#0a1a2c;"></div>
<div class="a" style="left:1792px;top:653px;width:1px;height:5px;background:#0a1a2c;"></div>
<div class="t" style="left:1799.0px;top:646px;width:60px;height:21px;line-height:21px;text-align:center;color:#e8e8e8;">0</div>
<div class="a" style="left:1858px;top:646px;width:33px;height:18px;background:#66b6ec;"></div>
<div class="t" style="left:1858.0px;top:646px;width:33px;height:20px;line-height:20px;text-align:center;color:#163a64;font-size:12.5px;-webkit-text-stroke:0;transform:scaleX(0.86);">C</div>
<div class="a" style="left:1115px;top:666px;width:779px;height:1px;background:#4e4e4e;"></div>
<div class="t" style="left:1121px;top:668px;height:21px;line-height:21px;color:#e8e8e8;font-size:12px;">eyeLookUp_L</div>
<div class="t" style="left:1249.0px;top:668px;width:60px;height:21px;line-height:21px;text-align:center;color:#e8e8e8;">0</div>
<div class="t" style="left:1299.0px;top:668px;width:60px;height:21px;line-height:21px;text-align:center;color:#e8e8e8;">100</div>
<div class="t" style="left:1349.0px;top:668px;width:60px;height:21px;line-height:21px;text-align:center;color:#e8e8e8;">1</div>
<div class="a" style="left:1408px;top:669px;width:16px;height:16px;background:#66b6ec;"></div>
<div class="a" style="left:1414px;top:677px;width:4px;height:1px;background:#0a1a2c;"></div>
<div class="a" style="left:1427px;top:669px;width:1px;height:16px;background:#5a5a5a;"></div>
<div class="t" style="left:1574.0px;top:668px;width:60px;height:21px;line-height:21px;text-align:center;color:#e8e8e8;">0</div>
<div class="a" style="left:1785px;top:669px;width:16px;height:16px;background:#66b6ec;"></div>
<div class="a" style="left:1790px;top:677px;width:6px;height:1px;background:#0a1a2c;"></div>
<div class="a" style="left:1792px;top:675px;width:1px;height:5px;background:#0a1a2c;"></div>
<div class="t" style="left:1799.0px;top:668px;width:60px;height:21px;line-height:21px;text-align:center;color:#e8e8e8;">0</div>
<div class="a" style="left:1858px;top:668px;width:33px;height:18px;background:#66b6ec;"></div>
<div class="t" style="left:1858.0px;top:668px;width:33px;height:20px;line-height:20px;text-align:center;color:#163a64;font-size:12.5px;-webkit-text-stroke:0;transform:scaleX(0.86);">C</div>
<div class="a" style="left:1115px;top:688px;width:779px;height:1px;background:#4e4e4e;"></div>
<div class="t" style="left:1121px;top:690px;height:21px;line-height:21px;color:#e8e8e8;font-size:12px;">eyeLookOut_L</div>
<div class="t" style="left:1249.0px;top:690px;width:60px;height:21px;line-height:21px;text-align:center;color:#e8e8e8;">0</div>
<div class="t" style="left:1299.0px;top:690px;width:60px;height:21px;line-height:21px;text-align:center;color:#e8e8e8;">100</div>
<div class="t" style="left:1349.0px;top:690px;width:60px;height:21px;line-height:21px;text-align:center;color:#e8e8e8;">1</div>
<div class="a" style="left:1408px;top:691px;width:16px;height:16px;background:#66b6ec;"></div>
<div class="a" style="left:1414px;top:699px;width:4px;height:1px;background:#0a1a2c;"></div>
<div class="a" style="left:1427px;top:691px;width:1px;height:16px;background:#5a5a5a;"></div>
<div class="t" style="left:1574.0px;top:690px;width:60px;height:21px;line-height:21px;text-align:center;color:#e8e8e8;">0</div>
<div class="a" style="left:1785px;top:691px;width:16px;height:16px;background:#66b6ec;"></div>
<div class="a" style="left:1790px;top:699px;width:6px;height:1px;background:#0a1a2c;"></div>
<div class="a" style="left:1792px;top:697px;width:1px;height:5px;background:#0a1a2c;"></div>
<div class="t" style="left:1799.0px;top:690px;width:60px;height:21px;line-height:21px;text-align:center;color:#e8e8e8;">0</div>
<div class="a" style="left:1858px;top:690px;width:33px;height:18px;background:#66b6ec;"></div>
<div class="t" style="left:1858.0px;top:690px;width:33px;height:20px;line-height:20px;text-align:center;color:#163a64;font-size:12.5px;-webkit-text-stroke:0;transform:scaleX(0.86);">C</div>
<div class="a" style="left:1115px;top:710px;width:779px;height:1px;background:#4e4e4e;"></div>
<div class="t" style="left:1121px;top:712px;height:21px;line-height:21px;color:#e8e8e8;font-size:12px;">eyeLookIn_L</div>
<div class="t" style="left:1249.0px;top:712px;width:60px;height:21px;line-height:21px;text-align:center;color:#e8e8e8;">0</div>
<div class="t" style="left:1299.0px;top:712px;width:60px;height:21px;line-height:21px;text-align:center;color:#e8e8e8;">100</div>
<div class="t" style="left:1349.0px;top:712px;width:60px;height:21px;line-height:21px;text-align:center;color:#e8e8e8;">1</div>
<div class="a" style="left:1408px;top:713px;width:16px;height:16px;background:#66b6ec;"></div>
<div class="a" style="left:1414px;top:721px;width:4px;height:1px;background:#0a1a2c;"></div>
<div class="a" style="left:1427px;top:713px;width:1px;height:16px;background:#5a5a5a;"></div>
<div class="t" style="left:1574.0px;top:712px;width:60px;height:21px;line-height:21px;text-align:center;color:#e8e8e8;">0</div>
<div class="a" style="left:1785px;top:713px;width:16px;height:16px;background:#66b6ec;"></div>
<div class="a" style="left:1790px;top:721px;width:6px;height:1px;background:#0a1a2c;"></div>
<div class="a" style="left:1792px;top:719px;width:1px;height:5px;background:#0a1a2c;"></div>
<div class="t" style="left:1799.0px;top:712px;width:60px;height:21px;line-height:21px;text-align:center;color:#e8e8e8;">0</div>
<div class="a" style="left:1858px;top:712px;width:33px;height:18px;background:#66b6ec;"></div>
<div class="t" style="left:1858.0px;top:712px;width:33px;height:20px;line-height:20px;text-align:center;color:#163a64;font-size:12.5px;-webkit-text-stroke:0;transform:scaleX(0.86);">C</div>
<div class="a" style="left:1115px;top:732px;width:779px;height:1px;background:#4e4e4e;"></div>
<div class="t" style="left:1121px;top:734px;height:21px;line-height:21px;color:#e8e8e8;font-size:12px;">eyeLookDown_L</div>
<div class="t" style="left:1249.0px;top:734px;width:60px;height:21px;line-height:21px;text-align:center;color:#e8e8e8;">0</div>
<div class="t" style="left:1299.0px;top:734px;width:60px;height:21px;line-height:21px;text-align:center;color:#e8e8e8;">100</div>
<div class="t" style="left:1349.0px;top:734px;width:60px;height:21px;line-height:21px;text-align:center;color:#e8e8e8;">1.2</div>
<div class="a" style="left:1408px;top:735px;width:16px;height:16px;background:#66b6ec;"></div>
<div class="a" style="left:1414px;top:743px;width:4px;height:1px;background:#0a1a2c;"></div>
<div class="a" style="left:1427px;top:735px;width:1px;height:16px;background:#5a5a5a;"></div>
<div class="t" style="left:1574.0px;top:734px;width:60px;height:21px;line-height:21px;text-align:center;color:#e8e8e8;">0</div>
<div class="a" style="left:1785px;top:735px;width:16px;height:16px;background:#66b6ec;"></div>
<div class="a" style="left:1790px;top:743px;width:6px;height:1px;background:#0a1a2c;"></div>
<div class="a" style="left:1792px;top:741px;width:1px;height:5px;background:#0a1a2c;"></div>
<div class="t" style="left:1799.0px;top:734px;width:60px;height:21px;line-height:21px;text-align:center;color:#e8e8e8;">0</div>
<div class="a" style="left:1858px;top:734px;width:33px;height:18px;background:#66b6ec;"></div>
<div class="t" style="left:1858.0px;top:734px;width:33px;height:20px;line-height:20px;text-align:center;color:#163a64;font-size:12.5px;-webkit-text-stroke:0;transform:scaleX(0.86);">C</div>
<div class="a" style="left:1115px;top:754px;width:779px;height:1px;background:#4e4e4e;"></div>
<div class="t" style="left:1121px;top:756px;height:21px;line-height:21px;color:#e8e8e8;font-size:12px;">eyeBlink_L</div>
<div class="t" style="left:1249.0px;top:756px;width:60px;height:21px;line-height:21px;text-align:center;color:#e8e8e8;">0</div>
<div class="t" style="left:1299.0px;top:756px;width:60px;height:21px;line-height:21px;text-align:center;color:#e8e8e8;">100</div>
<div class="t" style="left:1349.0px;top:756px;width:60px;height:21px;line-height:21px;text-align:center;color:#e8e8e8;">1.5</div>
<div class="a" style="left:1408px;top:757px;width:16px;height:16px;background:#66b6ec;"></div>
<div class="a" style="left:1414px;top:765px;width:4px;height:1px;background:#0a1a2c;"></div>
<div class="a" style="left:1427px;top:757px;width:1px;height:16px;background:#5a5a5a;"></div>
<div class="t" style="left:1574.0px;top:756px;width:60px;height:21px;line-height:21px;text-align:center;color:#e8e8e8;">0</div>
<div class="a" style="left:1785px;top:757px;width:16px;height:16px;background:#66b6ec;"></div>
<div class="a" style="left:1790px;top:765px;width:6px;height:1px;background:#0a1a2c;"></div>
<div class="a" style="left:1792px;top:763px;width:1px;height:5px;background:#0a1a2c;"></div>
<div class="t" style="left:1799.0px;top:756px;width:60px;height:21px;line-height:21px;text-align:center;color:#e8e8e8;">0</div>
<div class="a" style="left:1858px;top:756px;width:33px;height:18px;background:#66b6ec;"></div>
<div class="t" style="left:1858.0px;top:756px;width:33px;height:20px;line-height:20px;text-align:center;color:#163a64;font-size:12.5px;-webkit-text-stroke:0;transform:scaleX(0.86);">C</div>
<div class="a" style="left:1115px;top:776px;width:779px;height:1px;background:#4e4e4e;"></div>
<div class="t" style="left:1121px;top:778px;height:21px;line-height:21px;color:#e8e8e8;font-size:12px;">eyeSquint_L</div>
<div class="t" style="left:1249.0px;top:778px;width:60px;height:21px;line-height:21px;text-align:center;color:#e8e8e8;">0</div>
<div class="t" style="left:1299.0px;top:778px;width:60px;height:21px;line-height:21px;text-align:center;color:#e8e8e8;">100</div>
<div class="t" style="left:1349.0px;top:778px;width:60px;height:21px;line-height:21px;text-align:center;color:#e8e8e8;">1</div>
<div class="a" style="left:1408px;top:779px;width:16px;height:16px;background:#66b6ec;"></div>
<div class="a" style="left:1414px;top:787px;width:4px;height:1px;background:#0a1a2c;"></div>
<div class="a" style="left:1427px;top:779px;width:1px;height:16px;background:#5a5a5a;"></div>
<div class="t" style="left:1574.0px;top:778px;width:60px;height:21px;line-height:21px;text-align:center;color:#e8e8e8;">0</div>
<div class="a" style="left:1785px;top:779px;width:16px;height:16px;background:#66b6ec;"></div>
<div class="a" style="left:1790px;top:787px;width:6px;height:1px;background:#0a1a2c;"></div>
<div class="a" style="left:1792px;top:785px;width:1px;height:5px;background:#0a1a2c;"></div>
<div class="t" style="left:1799.0px;top:778px;width:60px;height:21px;line-height:21px;text-align:center;color:#e8e8e8;">0</div>
<div class="a" style="left:1858px;top:778px;width:33px;height:18px;background:#66b6ec;"></div>
<div class="t" style="left:1858.0px;top:778px;width:33px;height:20px;line-height:20px;text-align:center;color:#163a64;font-size:12.5px;-webkit-text-stroke:0;transform:scaleX(0.86);">C</div>
<div class="a" style="left:1115px;top:798px;width:779px;height:1px;background:#4e4e4e;"></div>
<div class="t" style="left:1121px;top:800px;height:21px;line-height:21px;color:#e8e8e8;font-size:12px;">eyeWide_L</div>
<div class="t" style="left:1249.0px;top:800px;width:60px;height:21px;line-height:21px;text-align:center;color:#e8e8e8;">0</div>
<div class="t" style="left:1299.0px;top:800px;width:60px;height:21px;line-height:21px;text-align:center;color:#e8e8e8;">100</div>
<div class="t" style="left:1349.0px;top:800px;width:60px;height:21px;line-height:21px;text-align:center;color:#e8e8e8;">1.2</div>
<div class="a" style="left:1408px;top:801px;width:16px;height:16px;background:#66b6ec;"></div>
<div class="a" style="left:1414px;top:809px;width:4px;height:1px;background:#0a1a2c;"></div>
<div class="a" style="left:1427px;top:801px;width:1px;height:16px;background:#5a5a5a;"></div>
<div class="t" style="left:1574.0px;top:800px;width:60px;height:21px;line-height:21px;text-align:center;color:#e8e8e8;">0</div>
<div class="a" style="left:1785px;top:801px;width:16px;height:16px;background:#66b6ec;"></div>
<div class="a" style="left:1790px;top:809px;width:6px;height:1px;background:#0a1a2c;"></div>
<div class="a" style="left:1792px;top:807px;width:1px;height:5px;background:#0a1a2c;"></div>
<div class="t" style="left:1799.0px;top:800px;width:60px;height:21px;line-height:21px;text-align:center;color:#e8e8e8;">0</div>
<div class="a" style="left:1858px;top:800px;width:33px;height:18px;background:#66b6ec;"></div>
<div class="t" style="left:1858.0px;top:800px;width:33px;height:20px;line-height:20px;text-align:center;color:#163a64;font-size:12.5px;-webkit-text-stroke:0;transform:scaleX(0.86);">C</div>
<div class="a" style="left:1115px;top:820px;width:779px;height:1px;background:#4e4e4e;"></div>
<div class="t" style="left:1121px;top:822px;height:21px;line-height:21px;color:#e8e8e8;font-size:12px;">noseSneer_L</div>
<div class="t" style="left:1249.0px;top:822px;width:60px;height:21px;line-height:21px;text-align:center;color:#e8e8e8;">0</div>
<div class="t" style="left:1299.0px;top:822px;width:60px;height:21px;line-height:21px;text-align:center;color:#e8e8e8;">100</div>
<div class="t" style="left:1349.0px;top:822px;width:60px;height:21px;line-height:21px;text-align:center;color:#e8e8e8;">1</div>
<div class="a" style="left:1408px;top:823px;width:16px;height:16px;background:#66b6ec;"></div>
<div class="a" style="left:1414px;top:831px;width:4px;height:1px;background:#0a1a2c;"></div>
<div class="a" style="left:1427px;top:823px;width:1px;height:16px;background:#5a5a5a;"></div>
<div class="t" style="left:1574.0px;top:822px;width:60px;height:21px;line-height:21px;text-align:center;color:#e8e8e8;">0</div>
<div class="a" style="left:1785px;top:823px;width:16px;height:16px;background:#66b6ec;"></div>
<div class="a" style="left:1790px;top:831px;width:6px;height:1px;background:#0a1a2c;"></div>
<div class="a" style="left:1792px;top:829px;width:1px;height:5px;background:#0a1a2c;"></div>
<div class="t" style="left:1799.0px;top:822px;width:60px;height:21px;line-height:21px;text-align:center;color:#e8e8e8;">0</div>
<div class="a" style="left:1858px;top:822px;width:33px;height:18px;background:#66b6ec;"></div>
<div class="t" style="left:1858.0px;top:822px;width:33px;height:20px;line-height:20px;text-align:center;color:#163a64;font-size:12.5px;-webkit-text-stroke:0;transform:scaleX(0.86);">C</div>
<div class="a" style="left:1115px;top:842px;width:779px;height:1px;background:#4e4e4e;"></div>
<div class="t" style="left:1121px;top:844px;height:21px;line-height:21px;color:#e8e8e8;font-size:12px;">cheekSquint_L</div>
<div class="t" style="left:1249.0px;top:844px;width:60px;height:21px;line-height:21px;text-align:center;color:#e8e8e8;">0</div>
<div class="t" style="left:1299.0px;top:844px;width:60px;height:21px;line-height:21px;text-align:center;color:#e8e8e8;">100</div>
<div class="t" style="left:1349.0px;top:844px;width:60px;height:21px;line-height:21px;text-align:center;color:#e8e8e8;">1</div>
<div class="a" style="left:1408px;top:845px;width:16px;height:16px;background:#66b6ec;"></div>
<div class="a" style="left:1414px;top:853px;width:4px;height:1px;background:#0a1a2c;"></div>
<div class="a" style="left:1427px;top:845px;width:1px;height:16px;background:#5a5a5a;"></div>
<div class="t" style="left:1574.0px;top:844px;width:60px;height:21px;line-height:21px;text-align:center;color:#e8e8e8;">0</div>
<div class="a" style="left:1785px;top:845px;width:16px;height:16px;background:#66b6ec;"></div>
<div class="a" style="left:1790px;top:853px;width:6px;height:1px;background:#0a1a2c;"></div>
<div class="a" style="left:1792px;top:851px;width:1px;height:5px;background:#0a1a2c;"></div>
<div class="t" style="left:1799.0px;top:844px;width:60px;height:21px;line-height:21px;text-align:center;color:#e8e8e8;">0</div>
<div class="a" style="left:1858px;top:844px;width:33px;height:18px;background:#66b6ec;"></div>
<div class="t" style="left:1858.0px;top:844px;width:33px;height:20px;line-height:20px;text-align:center;color:#163a64;font-size:12.5px;-webkit-text-stroke:0;transform:scaleX(0.86);">C</div>
<div class="a" style="left:1115px;top:864px;width:779px;height:1px;background:#4e4e4e;"></div>
<div class="t" style="left:1121px;top:866px;height:21px;line-height:21px;color:#e8e8e8;font-size:12px;">mouthUpperUp_L</div>
<div class="t" style="left:1249.0px;top:866px;width:60px;height:21px;line-height:21px;text-align:center;color:#e8e8e8;">0</div>
<div class="t" style="left:1299.0px;top:866px;width:60px;height:21px;line-height:21px;text-align:center;color:#e8e8e8;">100</div>
<div class="t" style="left:1349.0px;top:866px;width:60px;height:21px;line-height:21px;text-align:center;color:#e8e8e8;">1</div>
<div class="a" style="left:1408px;top:867px;width:16px;height:16px;background:#66b6ec;"></div>
<div class="a" style="left:1414px;top:875px;width:4px;height:1px;background:#0a1a2c;"></div>
<div class="a" style="left:1427px;top:867px;width:1px;height:16px;background:#5a5a5a;"></div>
<div class="t" style="left:1574.0px;top:866px;width:60px;height:21px;line-height:21px;text-align:center;color:#e8e8e8;">0</div>
<div class="a" style="left:1785px;top:867px;width:16px;height:16px;background:#66b6ec;"></div>
<div class="a" style="left:1790px;top:875px;width:6px;height:1px;background:#0a1a2c;"></div>
<div class="a" style="left:1792px;top:873px;width:1px;height:5px;background:#0a1a2c;"></div>
<div class="t" style="left:1799.0px;top:866px;width:60px;height:21px;line-height:21px;text-align:center;color:#e8e8e8;">0</div>
<div class="a" style="left:1858px;top:866px;width:33px;height:18px;background:#66b6ec;"></div>
<div class="t" style="left:1858.0px;top:866px;width:33px;height:20px;line-height:20px;text-align:center;color:#163a64;font-size:12.5px;-webkit-text-stroke:0;transform:scaleX(0.86);">C</div>
<div class="a" style="left:1115px;top:886px;width:779px;height:1px;background:#4e4e4e;"></div>
<div class="t" style="left:1121px;top:888px;height:21px;line-height:21px;color:#e8e8e8;font-size:12px;">mouthDimple_L</div>
<div class="t" style="left:1249.0px;top:888px;width:60px;height:21px;line-height:21px;text-align:center;color:#e8e8e8;">0</div>
<div class="t" style="left:1299.0px;top:888px;width:60px;height:21px;line-height:21px;text-align:center;color:#e8e8e8;">100</div>
<div class="t" style="left:1349.0px;top:888px;width:60px;height:21px;line-height:21px;text-align:center;color:#e8e8e8;">1</div>
<div class="a" style="left:1408px;top:889px;width:16px;height:16px;background:#66b6ec;"></div>
<div class="a" style="left:1414px;top:897px;width:4px;height:1px;background:#0a1a2c;"></div>
<div class="a" style="left:1427px;top:889px;width:1px;height:16px;background:#5a5a5a;"></div>
<div class="t" style="left:1574.0px;top:888px;width:60px;height:21px;line-height:21px;text-align:center;color:#e8e8e8;">0</div>
<div class="a" style="left:1785px;top:889px;width:16px;height:16px;background:#66b6ec;"></div>
<div class="a" style="left:1790px;top:897px;width:6px;height:1px;background:#0a1a2c;"></div>
<div class="a" style="left:1792px;top:895px;width:1px;height:5px;background:#0a1a2c;"></div>
<div class="t" style="left:1799.0px;top:888px;width:60px;height:21px;line-height:21px;text-align:center;color:#e8e8e8;">0</div>
<div class="a" style="left:1858px;top:888px;width:33px;height:18px;background:#66b6ec;"></div>
<div class="t" style="left:1858.0px;top:888px;width:33px;height:20px;line-height:20px;text-align:center;color:#163a64;font-size:12.5px;-webkit-text-stroke:0;transform:scaleX(0.86);">C</div>
<div class="a" style="left:1115px;top:908px;width:779px;height:1px;background:#4e4e4e;"></div>
<div class="t" style="left:1121px;top:910px;height:21px;line-height:21px;color:#e8e8e8;font-size:12px;">mouthFrown_L</div>
<div class="t" style="left:1249.0px;top:910px;width:60px;height:21px;line-height:21px;text-align:center;color:#e8e8e8;">0</div>
<div class="t" style="left:1299.0px;top:910px;width:60px;height:21px;line-height:21px;text-align:center;color:#e8e8e8;">100</div>
<div class="t" style="left:1349.0px;top:910px;width:60px;height:21px;line-height:21px;text-align:center;color:#e8e8e8;">2.34</div>
<div class="a" style="left:1408px;top:911px;width:16px;height:16px;background:#66b6ec;"></div>
<div class="a" style="left:1414px;top:919px;width:4px;height:1px;background:#0a1a2c;"></div>
<div class="a" style="left:1427px;top:911px;width:1px;height:16px;background:#5a5a5a;"></div>
<div class="t" style="left:1574.0px;top:910px;width:60px;height:21px;line-height:21px;text-align:center;color:#e8e8e8;">0</div>
<div class="a" style="left:1785px;top:911px;width:16px;height:16px;background:#66b6ec;"></div>
<div class="a" style="left:1790px;top:919px;width:6px;height:1px;background:#0a1a2c;"></div>
<div class="a" style="left:1792px;top:917px;width:1px;height:5px;background:#0a1a2c;"></div>
<div class="t" style="left:1799.0px;top:910px;width:60px;height:21px;line-height:21px;text-align:center;color:#e8e8e8;">0</div>
<div class="a" style="left:1858px;top:910px;width:33px;height:18px;background:#66b6ec;"></div>
<div class="t" style="left:1858.0px;top:910px;width:33px;height:20px;line-height:20px;text-align:center;color:#163a64;font-size:12.5px;-webkit-text-stroke:0;transform:scaleX(0.86);">C</div>
<div class="a" style="left:1115px;top:930px;width:779px;height:1px;background:#4e4e4e;"></div>
<div class="t" style="left:1121px;top:932px;height:21px;line-height:21px;color:#e8e8e8;font-size:12px;">mouthSmile_L</div>
<div class="t" style="left:1249.0px;top:932px;width:60px;height:21px;line-height:21px;text-align:center;color:#e8e8e8;">0</div>
<div class="t" style="left:1299.0px;top:932px;width:60px;height:21px;line-height:21px;text-align:center;color:#e8e8e8;">100</div>
<div class="t" style="left:1349.0px;top:932px;width:60px;height:21px;line-height:21px;text-align:center;color:#e8e8e8;">1.5</div>
<div class="a" style="left:1408px;top:933px;width:16px;height:16px;background:#66b6ec;"></div>
<div class="a" style="left:1414px;top:941px;width:4px;height:1px;background:#0a1a2c;"></div>
<div class="a" style="left:1427px;top:933px;width:1px;height:16px;background:#5a5a5a;"></div>
<div class="t" style="left:1574.0px;top:932px;width:60px;height:21px;line-height:21px;text-align:center;color:#e8e8e8;">0</div>
<div class="a" style="left:1785px;top:933px;width:16px;height:16px;background:#66b6ec;"></div>
<div class="a" style="left:1790px;top:941px;width:6px;height:1px;background:#0a1a2c;"></div>
<div class="a" style="left:1792px;top:939px;width:1px;height:5px;background:#0a1a2c;"></div>
<div class="t" style="left:1799.0px;top:932px;width:60px;height:21px;line-height:21px;text-align:center;color:#e8e8e8;">0</div>
<div class="a" style="left:1858px;top:932px;width:33px;height:18px;background:#66b6ec;"></div>
<div class="t" style="left:1858.0px;top:932px;width:33px;height:20px;line-height:20px;text-align:center;color:#163a64;font-size:12.5px;-webkit-text-stroke:0;transform:scaleX(0.86);">C</div>
<div class="a" style="left:1115px;top:952px;width:779px;height:1px;background:#4e4e4e;"></div>
<div class="t" style="left:1121px;top:954px;height:21px;line-height:21px;color:#e8e8e8;font-size:12px;">mouthPress_L</div>
<div class="t" style="left:1249.0px;top:954px;width:60px;height:21px;line-height:21px;text-align:center;color:#e8e8e8;">0</div>
<div class="t" style="left:1299.0px;top:954px;width:60px;height:21px;line-height:21px;text-align:center;color:#e8e8e8;">100</div>
<div class="t" style="left:1349.0px;top:954px;width:60px;height:21px;line-height:21px;text-align:center;color:#e8e8e8;">1</div>
<div class="a" style="left:1408px;top:955px;width:16px;height:16px;background:#66b6ec;"></div>
<div class="a" style="left:1414px;top:963px;width:4px;height:1px;background:#0a1a2c;"></div>
<div class="a" style="left:1427px;top:955px;width:1px;height:16px;background:#5a5a5a;"></div>
<div class="t" style="left:1574.0px;top:954px;width:60px;height:21px;line-height:21px;text-align:center;color:#e8e8e8;">0</div>
<div class="a" style="left:1785px;top:955px;width:16px;height:16px;background:#66b6ec;"></div>
<div class="a" style="left:1790px;top:963px;width:6px;height:1px;background:#0a1a2c;"></div>
<div class="a" style="left:1792px;top:961px;width:1px;height:5px;background:#0a1a2c;"></div>
<div class="t" style="left:1799.0px;top:954px;width:60px;height:21px;line-height:21px;text-align:center;color:#e8e8e8;">0</div>
<div class="a" style="left:1858px;top:954px;width:33px;height:18px;background:#66b6ec;"></div>
<div class="t" style="left:1858.0px;top:954px;width:33px;height:20px;line-height:20px;text-align:center;color:#163a64;font-size:12.5px;-webkit-text-stroke:0;transform:scaleX(0.86);">C</div>
<div class="a" style="left:1115px;top:974px;width:779px;height:1px;background:#4e4e4e;"></div>
<div class="t" style="left:1121px;top:976px;height:21px;line-height:21px;color:#e8e8e8;font-size:12px;">mouthStretch_L</div>
<div class="t" style="left:1249.0px;top:976px;width:60px;height:21px;line-height:21px;text-align:center;color:#e8e8e8;">0</div>
<div class="t" style="left:1299.0px;top:976px;width:60px;height:21px;line-height:21px;text-align:center;color:#e8e8e8;">100</div>
<div class="t" style="left:1349.0px;top:976px;width:60px;height:21px;line-height:21px;text-align:center;color:#e8e8e8;">1</div>
<div class="a" style="left:1408px;top:977px;width:16px;height:16px;background:#66b6ec;"></div>
<div class="a" style="left:1414px;top:985px;width:4px;height:1px;background:#0a1a2c;"></div>
<div class="a" style="left:1427px;top:977px;width:1px;height:16px;background:#5a5a5a;"></div>
<div class="t" style="left:1574.0px;top:976px;width:60px;height:21px;line-height:21px;text-align:center;color:#e8e8e8;">0</div>
<div class="a" style="left:1785px;top:977px;width:16px;height:16px;background:#66b6ec;"></div>
<div class="a" style="left:1790px;top:985px;width:6px;height:1px;background:#0a1a2c;"></div>
<div class="a" style="left:1792px;top:983px;width:1px;height:5px;background:#0a1a2c;"></div>
<div class="t" style="left:1799.0px;top:976px;width:60px;height:21px;line-height:21px;text-align:center;color:#e8e8e8;">0</div>
<div class="a" style="left:1858px;top:976px;width:33px;height:18px;background:#66b6ec;"></div>
<div class="t" style="left:1858.0px;top:976px;width:33px;height:20px;line-height:20px;text-align:center;color:#163a64;font-size:12.5px;-webkit-text-stroke:0;transform:scaleX(0.86);">C</div>
<div class="a" style="left:1115px;top:996px;width:779px;height:1px;background:#4e4e4e;"></div>
<div class="t" style="left:1121px;top:998px;height:21px;line-height:21px;color:#e8e8e8;font-size:12px;">mouthLowerDown_L</div>
<div class="t" style="left:1249.0px;top:998px;width:60px;height:21px;line-height:21px;text-align:center;color:#e8e8e8;">0</div>
<div class="t" style="left:1299.0px;top:998px;width:60px;height:21px;line-height:21px;text-align:center;color:#e8e8e8;">100</div>
<div class="t" style="left:1349.0px;top:998px;width:60px;height:21px;line-height:21px;text-align:center;color:#e8e8e8;">1.5</div>
<div class="a" style="left:1408px;top:999px;width:16px;height:16px;background:#66b6ec;"></div>
<div class="a" style="left:1414px;top:1007px;width:4px;height:1px;background:#0a1a2c;"></div>
<div class="a" style="left:1427px;top:999px;width:1px;height:16px;background:#5a5a5a;"></div>
<div class="t" style="left:1574.0px;top:998px;width:60px;height:21px;line-height:21px;text-align:center;color:#e8e8e8;">0</div>
<div class="a" style="left:1785px;top:999px;width:16px;height:16px;background:#66b6ec;"></div>
<div class="a" style="left:1790px;top:1007px;width:6px;height:1px;background:#0a1a2c;"></div>
<div class="a" style="left:1792px;top:1005px;width:1px;height:5px;background:#0a1a2c;"></div>
<div class="t" style="left:1799.0px;top:998px;width:60px;height:21px;line-height:21px;text-align:center;color:#e8e8e8;">0</div>
<div class="a" style="left:1858px;top:998px;width:33px;height:18px;background:#66b6ec;"></div>
<div class="t" style="left:1858.0px;top:998px;width:33px;height:20px;line-height:20px;text-align:center;color:#163a64;font-size:12.5px;-webkit-text-stroke:0;transform:scaleX(0.86);">C</div>
<div class="a" style="left:1115px;top:1018px;width:780px;height:1px;background:#4e4e4e;"></div>
<div class="t" style="left:1119.0px;top:159px;width:200px;height:20px;line-height:20px;text-align:center;font-size:11.6px;">Right Eye Direction</div>
<svg class="a" style="left:1139px;top:176px" width="160" height="160" viewBox="0 0 160 160"><path d="M5 80H155M80 5V155" stroke="#a8a8a8" stroke-width="2"/><circle cx="80" cy="80" r="49.5" fill="none" stroke="#d8d8d8" stroke-width="1.5"/><circle cx="80" cy="80" r="5" fill="#66b6ec"/></svg>
<div class="t" style="left:1703.0px;top:159px;width:200px;height:20px;line-height:20px;text-align:center;font-size:11.6px;">Left Eye Direction</div>
<svg class="a" style="left:1723px;top:176px" width="160" height="160" viewBox="0 0 160 160"><path d="M5 80H155M80 5V155" stroke="#a8a8a8" stroke-width="2"/><circle cx="80" cy="80" r="49.5" fill="none" stroke="#d8d8d8" stroke-width="1.5"/><circle cx="80" cy="80" r="5" fill="#66b6ec"/></svg>
<div class="t" style="left:1411.0px;top:363px;width:200px;height:20px;line-height:20px;text-align:center;font-size:11.6px;">Face Direction</div>
<svg class="a" style="left:1431px;top:380px" width="160" height="160" viewBox="0 0 160 160"><path d="M5 80H155M80 5V155" stroke="#a8a8a8" stroke-width="2"/><circle cx="80" cy="80" r="49.5" fill="none" stroke="#d8d8d8" stroke-width="1.5"/><circle cx="80" cy="80" r="5" fill="#66b6ec"/></svg>
<div class="a" style="left:392px;top:1078px;width:48px;height:2px;background:#3a3a3a;"></div>
<div class="a" style="left:152px;top:801px;width:190px;height:105px;background:#1d1d1d;border-radius:4px;box-shadow:0 1px 4px rgba(0,0,0,0.5);"></div>
<div class="t" style="left:186px;top:807px;height:20px;line-height:20px;color:#86b2d8;">Play</div>
<div class="t" style="left:186px;top:832px;height:20px;line-height:20px;color:#86b2d8;">Rename</div>
<div class="t" style="left:259px;top:832px;height:20px;line-height:20px;color:#6c8eac;">F2</div>
<div class="t" style="left:186px;top:857px;height:20px;line-height:20px;color:#86b2d8;">Export</div>
<div class="t" style="left:259px;top:857px;height:20px;line-height:20px;color:#6c8eac;">Ctrl+Shift+E</div>
<div class="t" style="left:186px;top:882px;height:20px;line-height:20px;color:#86b2d8;">Delete</div>
<div class="t" style="left:259px;top:882px;height:20px;line-height:20px;color:#6c8eac;">Delete</div>
</body></html>
